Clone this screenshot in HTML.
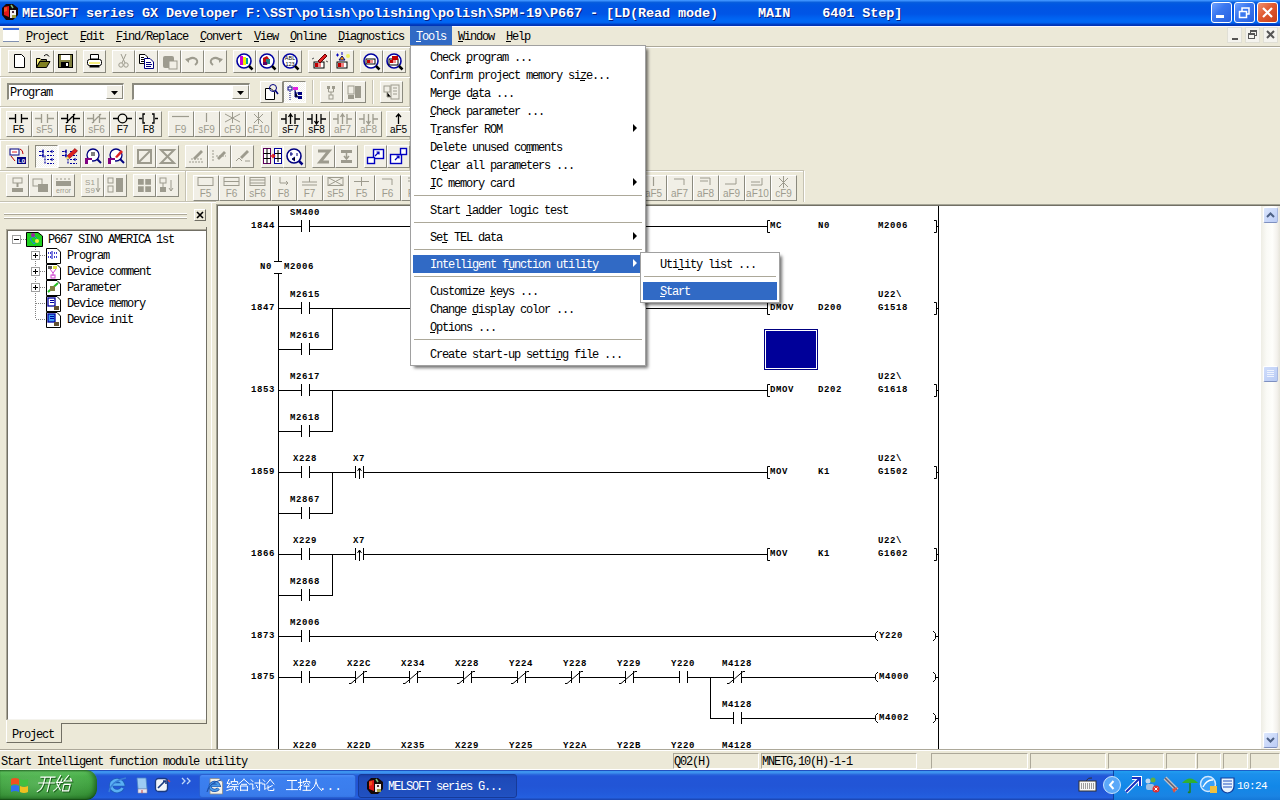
<!DOCTYPE html>
<html><head><meta charset="utf-8"><title>MELSOFT GX Developer</title>
<style>
html,body{margin:0;padding:0;}
body{width:1280px;height:800px;overflow:hidden;position:relative;background:#ECE9D8;font-family:"Liberation Mono",monospace;}
.t{position:absolute;line-height:1;white-space:pre;}
svg{overflow:visible}
</style></head><body>
<div style="position:absolute;left:0px;top:0px;width:1280px;height:26px;background:linear-gradient(to bottom,#3D95FF 0px,#3A8EFB 1px,#0A60DC 2px,#0058E2 4px,#0054E3 8px,#0055E6 14px,#0062F0 18px,#0068F6 21px,#0062EE 23px,#0042C8 24px,#0030B0 26px)"></div>
<svg style="position:absolute;left:1px;top:3px;shape-rendering:auto" width="18" height="18" viewBox="0 0 18 18" shape-rendering="crispEdges"><path d="M5 1 H12 L17 5 V12 L12 17 H5 L1 12 V5Z" fill="#140808"/><path d="M3 4 L8 3 V14 L3 12Z" fill="#E01818"/><path d="M3 5 L6 4 V8 L3 9Z" fill="#F05020"/><rect x="9" y="7" width="6" height="5" fill="#F4F0F0"/><rect x="9" y="12" width="2" height="3" fill="#E8E0F0"/><rect x="11" y="8" width="2" height="2" fill="#503040"/><rect x="11" y="12" width="4" height="3" fill="#A0A040"/><path d="M10 2 L12 5" stroke="#80C080" stroke-width="1.5"/></svg>
<div class="t " style="left:22px;top:6.66px;font-size:13.5px;letter-spacing:-0.1px;color:#fff;font-weight:bold;font-family:'Liberation Mono';white-space:pre;text-shadow:1px 1px 0 #0A1E80">MELSOFT series GX Developer F:\SST\polish\polishing\polish\SPM-19\P667 - [LD(Read mode)     MAIN    6401 Step]</div>
<div style="position:absolute;left:1211px;top:2px;width:19px;height:19px;border:1px solid #fff;border-radius:3px;background:linear-gradient(135deg,#6FA2FF 0%,#3B78F0 40%,#2660E0 100%)"></div>
<div style="position:absolute;left:1234px;top:2px;width:19px;height:19px;border:1px solid #fff;border-radius:3px;background:linear-gradient(135deg,#6FA2FF 0%,#3B78F0 40%,#2660E0 100%)"></div>
<div style="position:absolute;left:1257px;top:2px;width:19px;height:19px;border:1px solid #fff;border-radius:3px;background:linear-gradient(135deg,#F09070 0%,#E05A30 45%,#C8401A 100%)"></div>
<div style="position:absolute;left:1216px;top:15px;width:8px;height:3px;background:#fff"></div>
<svg style="position:absolute;left:1234px;top:2px;shape-rendering:auto" width="21" height="21" viewBox="0 0 21 21" shape-rendering="crispEdges"><rect x="8" y="6" width="7" height="6" fill="none" stroke="#fff" stroke-width="1.5"/><rect x="5.5" y="9.5" width="7" height="6" fill="#3B78F0" stroke="#fff" stroke-width="1.5"/></svg>
<svg style="position:absolute;left:1257px;top:2px;shape-rendering:auto" width="21" height="21" viewBox="0 0 21 21" shape-rendering="crispEdges"><path d="M6 6 L15 15 M15 6 L6 15" stroke="#fff" stroke-width="2.2"/></svg>
<div style="position:absolute;left:0px;top:26px;width:1280px;height:1px;background:#F8F8FF"></div>
<div style="position:absolute;left:0px;top:46px;width:1280px;height:1px;background:#ACA899"></div>
<div style="position:absolute;left:0px;top:47px;width:1280px;height:1px;background:#fff"></div>
<div style="position:absolute;left:3px;top:28px;width:16px;height:14px;background:#fff;border-top:2px solid #3A6EE0;border-bottom:1px solid #8090B0;box-sizing:border-box"></div>
<div style="position:absolute;left:410px;top:26px;width:42px;height:19px;background:#316AC5"></div>
<div class="t " style="left:26px;top:30.81px;font-size:12px;letter-spacing:-1.2px;color:#000;font-weight:normal;font-family:'Liberation Mono';">Project</div>
<div style="position:absolute;left:26px;top:41px;width:5px;height:1px;background:#000"></div>
<div class="t " style="left:80px;top:30.81px;font-size:12px;letter-spacing:-1.2px;color:#000;font-weight:normal;font-family:'Liberation Mono';">Edit</div>
<div style="position:absolute;left:80px;top:41px;width:5px;height:1px;background:#000"></div>
<div class="t " style="left:116px;top:30.81px;font-size:12px;letter-spacing:-1.2px;color:#000;font-weight:normal;font-family:'Liberation Mono';">Find/Replace</div>
<div style="position:absolute;left:116px;top:41px;width:5px;height:1px;background:#000"></div>
<div class="t " style="left:200px;top:30.81px;font-size:12px;letter-spacing:-1.2px;color:#000;font-weight:normal;font-family:'Liberation Mono';">Convert</div>
<div style="position:absolute;left:200px;top:41px;width:5px;height:1px;background:#000"></div>
<div class="t " style="left:254px;top:30.81px;font-size:12px;letter-spacing:-1.2px;color:#000;font-weight:normal;font-family:'Liberation Mono';">View</div>
<div style="position:absolute;left:254px;top:41px;width:5px;height:1px;background:#000"></div>
<div class="t " style="left:290px;top:30.81px;font-size:12px;letter-spacing:-1.2px;color:#000;font-weight:normal;font-family:'Liberation Mono';">Online</div>
<div style="position:absolute;left:290px;top:41px;width:5px;height:1px;background:#000"></div>
<div class="t " style="left:338px;top:30.81px;font-size:12px;letter-spacing:-1.2px;color:#000;font-weight:normal;font-family:'Liberation Mono';">Diagnostics</div>
<div style="position:absolute;left:338px;top:41px;width:5px;height:1px;background:#000"></div>
<div class="t " style="left:416px;top:30.81px;font-size:12px;letter-spacing:-1.2px;color:#fff;font-weight:normal;font-family:'Liberation Mono';">Tools</div>
<div style="position:absolute;left:416px;top:41px;width:5px;height:1px;background:#fff"></div>
<div class="t " style="left:458px;top:30.81px;font-size:12px;letter-spacing:-1.2px;color:#000;font-weight:normal;font-family:'Liberation Mono';">Window</div>
<div style="position:absolute;left:458px;top:41px;width:5px;height:1px;background:#000"></div>
<div class="t " style="left:506px;top:30.81px;font-size:12px;letter-spacing:-1.2px;color:#000;font-weight:normal;font-family:'Liberation Mono';">Help</div>
<div style="position:absolute;left:506px;top:41px;width:5px;height:1px;background:#000"></div>
<div style="position:absolute;left:1227px;top:27px;width:15px;height:16px;background:#F4F3EE;border:1px solid #E0DFD5;box-sizing:border-box"></div>
<div style="position:absolute;left:1245px;top:27px;width:15px;height:16px;background:#F4F3EE;border:1px solid #E0DFD5;box-sizing:border-box"></div>
<div style="position:absolute;left:1263px;top:27px;width:15px;height:16px;background:#F4F3EE;border:1px solid #E0DFD5;box-sizing:border-box"></div>
<div style="position:absolute;left:1232px;top:38px;width:6px;height:2px;background:#555"></div>
<svg style="position:absolute;left:1245px;top:27px;" width="15" height="16" viewBox="0 0 15 16" shape-rendering="crispEdges"><rect x="5.5" y="3.5" width="6" height="5" fill="none" stroke="#555" stroke-width="1"/><rect x="3.5" y="6.5" width="6" height="5" fill="#F4F3EE" stroke="#555" stroke-width="1"/><rect x="5" y="3" width="7" height="2" fill="#555"/><rect x="3" y="6" width="7" height="2" fill="#555"/></svg>
<svg style="position:absolute;left:1263px;top:27px;shape-rendering:auto" width="15" height="16" viewBox="0 0 15 16" shape-rendering="crispEdges"><path d="M4 4 L11 11 M11 4 L4 11" stroke="#555" stroke-width="2"/></svg>
<div style="position:absolute;left:0px;top:76px;width:640px;height:1px;background:#C5C2B2"></div>
<div style="position:absolute;left:0px;top:77px;width:640px;height:1px;background:#FFFFFF"></div>
<div style="position:absolute;left:0px;top:106px;width:640px;height:1px;background:#C5C2B2"></div>
<div style="position:absolute;left:0px;top:107px;width:640px;height:1px;background:#FFFFFF"></div>
<div style="position:absolute;left:0px;top:139px;width:640px;height:1px;background:#C5C2B2"></div>
<div style="position:absolute;left:0px;top:140px;width:640px;height:1px;background:#FFFFFF"></div>
<div style="position:absolute;left:0px;top:170px;width:804px;height:1px;background:#C5C2B2"></div>
<div style="position:absolute;left:0px;top:171px;width:804px;height:1px;background:#FFFFFF"></div>
<div style="position:absolute;left:0px;top:201px;width:216px;height:1px;background:#C5C2B2"></div>
<div style="position:absolute;left:0px;top:202px;width:216px;height:1px;background:#FFFFFF"></div>
<div style="position:absolute;left:409px;top:48px;width:1px;height:28px;background:#C5C2B2"></div>
<div style="position:absolute;left:0px;top:48px;width:1px;height:28px;background:#FFFFFF"></div>
<div style="position:absolute;left:409px;top:78px;width:1px;height:28px;background:#C5C2B2"></div>
<div style="position:absolute;left:0px;top:78px;width:1px;height:28px;background:#FFFFFF"></div>
<div style="position:absolute;left:409px;top:108px;width:1px;height:31px;background:#C5C2B2"></div>
<div style="position:absolute;left:0px;top:108px;width:1px;height:31px;background:#FFFFFF"></div>
<div style="position:absolute;left:409px;top:141px;width:1px;height:29px;background:#C5C2B2"></div>
<div style="position:absolute;left:0px;top:141px;width:1px;height:29px;background:#FFFFFF"></div>
<div style="position:absolute;left:185px;top:171px;width:1px;height:30px;background:#C5C2B2"></div>
<div style="position:absolute;left:186px;top:171px;width:1px;height:30px;background:#FFFFFF"></div>
<div style="position:absolute;left:803px;top:171px;width:1px;height:31px;background:#C5C2B2"></div>
<div style="position:absolute;left:804px;top:171px;width:1px;height:31px;background:#FFFFFF"></div>
<div style="position:absolute;left:8px;top:50px;width:23px;height:23px;box-sizing:border-box;border-top:1px solid #FFFFFF;border-left:1px solid #FFFFFF;border-bottom:1px solid #8B8A7E;border-right:1px solid #8B8A7E;background:#F1EFE6"></div>
<svg style="position:absolute;left:8px;top:50px;shape-rendering:auto" width="23" height="23" viewBox="0 0 23 23" shape-rendering="crispEdges"><path d="M6.5 4.5 H13.5 L16.5 7.5 V17.5 H6.5 Z" fill="#fff" stroke="#000"/></svg>
<div style="position:absolute;left:31px;top:50px;width:23px;height:23px;box-sizing:border-box;border-top:1px solid #FFFFFF;border-left:1px solid #FFFFFF;border-bottom:1px solid #8B8A7E;border-right:1px solid #8B8A7E;background:#F1EFE6"></div>
<svg style="position:absolute;left:31px;top:50px;shape-rendering:auto" width="23" height="23" viewBox="0 0 23 23" shape-rendering="crispEdges"><path d="M5.5 8.5 H9 L10 9.5 H15.5 V11 H9 L5.5 17.5 Z" fill="#F8F080" stroke="#000"/><path d="M5.5 17.5 L9 11.5 H19 L15.5 17.5 Z" fill="#808020" stroke="#000"/><path d="M13 6 Q16 3 18 6.5" fill="none" stroke="#000"/></svg>
<div style="position:absolute;left:54px;top:50px;width:23px;height:23px;box-sizing:border-box;border-top:1px solid #FFFFFF;border-left:1px solid #FFFFFF;border-bottom:1px solid #8B8A7E;border-right:1px solid #8B8A7E;background:#F1EFE6"></div>
<svg style="position:absolute;left:54px;top:50px;shape-rendering:auto" width="23" height="23" viewBox="0 0 23 23" shape-rendering="crispEdges"><rect x="4.5" y="4.5" width="14" height="13" fill="#808040" stroke="#000"/><rect x="7" y="5" width="9" height="5" fill="#fff"/><rect x="7" y="12" width="8" height="5" fill="#000"/><rect x="12" y="13" width="2" height="3" fill="#fff"/></svg>
<div style="position:absolute;left:83px;top:50px;width:23px;height:23px;box-sizing:border-box;border-top:1px solid #FFFFFF;border-left:1px solid #FFFFFF;border-bottom:1px solid #8B8A7E;border-right:1px solid #8B8A7E;background:#F1EFE6"></div>
<svg style="position:absolute;left:83px;top:50px;shape-rendering:auto" width="23" height="23" viewBox="0 0 23 23" shape-rendering="crispEdges"><path d="M7.5 4.5 H15.5 V9 H7.5Z" fill="#fff" stroke="#000"/><rect x="4.5" y="9.5" width="14" height="6" rx="2" fill="#fff" stroke="#000"/><rect x="6" y="12" width="11" height="2" fill="#F8F080"/><rect x="6.5" y="15.5" width="10" height="2" fill="#000"/></svg>
<div style="position:absolute;left:112px;top:50px;width:23px;height:23px;box-sizing:border-box;border-top:1px solid #FFFFFF;border-left:1px solid #FFFFFF;border-bottom:1px solid #8B8A7E;border-right:1px solid #8B8A7E;background:#F1EFE6"></div>
<svg style="position:absolute;left:112px;top:50px;shape-rendering:auto" width="23" height="23" viewBox="0 0 23 23" shape-rendering="crispEdges"><path d="M9 4 L13 13 M14 4 L10 13" stroke="#9D9B8E" fill="none"/><circle cx="9" cy="15" r="2.2" fill="none" stroke="#9D9B8E"/><circle cx="14" cy="15" r="2.2" fill="none" stroke="#9D9B8E"/></svg>
<div style="position:absolute;left:135px;top:50px;width:23px;height:23px;box-sizing:border-box;border-top:1px solid #FFFFFF;border-left:1px solid #FFFFFF;border-bottom:1px solid #8B8A7E;border-right:1px solid #8B8A7E;background:#F1EFE6"></div>
<svg style="position:absolute;left:135px;top:50px;shape-rendering:auto" width="23" height="23" viewBox="0 0 23 23" shape-rendering="crispEdges"><path d="M4.5 4.5 H10 L12.5 7 V13.5 H4.5Z" fill="#fff" stroke="#000"/><path d="M6 7.5 H9 M6 9.5 H10 M6 11.5 H9" stroke="#000"/><path d="M9.5 8.5 H15 L18.5 12 V18.5 H9.5Z" fill="#fff" stroke="#000080"/><path d="M11 12.5 H16 M11 14.5 H17 M11 16.5 H16" stroke="#000080"/></svg>
<div style="position:absolute;left:158px;top:50px;width:23px;height:23px;box-sizing:border-box;border-top:1px solid #FFFFFF;border-left:1px solid #FFFFFF;border-bottom:1px solid #8B8A7E;border-right:1px solid #8B8A7E;background:#F1EFE6"></div>
<svg style="position:absolute;left:158px;top:50px;shape-rendering:auto" width="23" height="23" viewBox="0 0 23 23" shape-rendering="crispEdges"><rect x="5" y="6" width="11" height="12" rx="2" fill="#9D9B8E"/><rect x="11" y="11" width="8" height="8" fill="#F1EFE6" stroke="#9D9B8E"/></svg>
<div style="position:absolute;left:181px;top:50px;width:23px;height:23px;box-sizing:border-box;border-top:1px solid #FFFFFF;border-left:1px solid #FFFFFF;border-bottom:1px solid #8B8A7E;border-right:1px solid #8B8A7E;background:#F1EFE6"></div>
<svg style="position:absolute;left:181px;top:50px;shape-rendering:auto" width="23" height="23" viewBox="0 0 23 23" shape-rendering="crispEdges"><path d="M6 11 Q10 6 15 9 Q18 12 14 15" fill="none" stroke="#9D9B8E" stroke-width="2"/><path d="M4 9 L8 13 L8 8Z" fill="#9D9B8E"/></svg>
<div style="position:absolute;left:204px;top:50px;width:23px;height:23px;box-sizing:border-box;border-top:1px solid #FFFFFF;border-left:1px solid #FFFFFF;border-bottom:1px solid #8B8A7E;border-right:1px solid #8B8A7E;background:#F1EFE6"></div>
<svg style="position:absolute;left:204px;top:50px;shape-rendering:auto" width="23" height="23" viewBox="0 0 23 23" shape-rendering="crispEdges"><path d="M17 11 Q13 6 8 9 Q5 12 9 15" fill="none" stroke="#9D9B8E" stroke-width="2"/><path d="M19 9 L15 13 L15 8Z" fill="#9D9B8E"/></svg>
<div style="position:absolute;left:233px;top:50px;width:23px;height:23px;box-sizing:border-box;border-top:1px solid #FFFFFF;border-left:1px solid #FFFFFF;border-bottom:1px solid #8B8A7E;border-right:1px solid #8B8A7E;background:#F1EFE6"></div>
<svg style="position:absolute;left:233px;top:50px;shape-rendering:auto" width="23" height="23" viewBox="0 0 23 23" shape-rendering="crispEdges"><circle cx="11" cy="11" r="7" fill="#fff" stroke="#0000A0" stroke-width="1.6"/><rect x="7" y="6" width="3" height="9" fill="#D000D0"/><rect x="10" y="7" width="3" height="8" fill="#F0F000"/><rect x="13" y="8" width="2" height="6" fill="#00A0A0"/><path d="M16 16 L19.5 19.5" stroke="#000" stroke-width="2.5"/></svg>
<div style="position:absolute;left:256px;top:50px;width:23px;height:23px;box-sizing:border-box;border-top:1px solid #FFFFFF;border-left:1px solid #FFFFFF;border-bottom:1px solid #8B8A7E;border-right:1px solid #8B8A7E;background:#F1EFE6"></div>
<svg style="position:absolute;left:256px;top:50px;shape-rendering:auto" width="23" height="23" viewBox="0 0 23 23" shape-rendering="crispEdges"><circle cx="11" cy="11" r="7" fill="#fff" stroke="#0000A0" stroke-width="1.6"/><path d="M7 8 L11 6 L14 10 L11 15 L7 13Z" fill="#C01010"/><rect x="10" y="9" width="4" height="5" fill="#208080"/><rect x="7" y="12" width="4" height="3" fill="#600060"/><path d="M16 16 L19.5 19.5" stroke="#000" stroke-width="2.5"/></svg>
<div style="position:absolute;left:279px;top:50px;width:23px;height:23px;box-sizing:border-box;border-top:1px solid #FFFFFF;border-left:1px solid #FFFFFF;border-bottom:1px solid #8B8A7E;border-right:1px solid #8B8A7E;background:#F1EFE6"></div>
<svg style="position:absolute;left:279px;top:50px;shape-rendering:auto" width="23" height="23" viewBox="0 0 23 23" shape-rendering="crispEdges"><circle cx="11" cy="11" r="7" fill="#fff" stroke="#0000A0" stroke-width="1.6"/><text x="11" y="10" font-size="5.5" font-family="Liberation Sans" text-anchor="middle" fill="#000">ABL</text><text x="11" y="15.5" font-size="5.5" font-family="Liberation Sans" text-anchor="middle" fill="#000">123</text><path d="M16 16 L19.5 19.5" stroke="#000" stroke-width="2.5"/></svg>
<div style="position:absolute;left:308px;top:50px;width:23px;height:23px;box-sizing:border-box;border-top:1px solid #FFFFFF;border-left:1px solid #FFFFFF;border-bottom:1px solid #8B8A7E;border-right:1px solid #8B8A7E;background:#F1EFE6"></div>
<svg style="position:absolute;left:308px;top:50px;shape-rendering:auto" width="23" height="23" viewBox="0 0 23 23" shape-rendering="crispEdges"><rect x="6" y="12" width="10" height="6" fill="#fff" stroke="#000"/><rect x="7" y="13" width="3" height="4" fill="#C00000"/><rect x="10" y="13" width="3" height="4" fill="#F08080"/><path d="M10 11 L17 4 L19 6 L12 13Z" fill="#E02020" stroke="#600"/><path d="M4 9 L6 8 M18 11 L20 12" stroke="#555"/></svg>
<div style="position:absolute;left:331px;top:50px;width:23px;height:23px;box-sizing:border-box;border-top:1px solid #FFFFFF;border-left:1px solid #FFFFFF;border-bottom:1px solid #8B8A7E;border-right:1px solid #8B8A7E;background:#F1EFE6"></div>
<svg style="position:absolute;left:331px;top:50px;shape-rendering:auto" width="23" height="23" viewBox="0 0 23 23" shape-rendering="crispEdges"><rect x="6" y="12" width="10" height="6" fill="#fff" stroke="#000"/><rect x="7" y="13" width="3" height="4" fill="#C00000"/><rect x="10" y="13" width="3" height="4" fill="#F08080"/><path d="M8 10 L11 6 L14 10Z" fill="#F0A000" stroke="#000080"/><path d="M5 5 H8 M6.5 3.5 V6.5 M11 2 V5" stroke="#0000C0"/><circle cx="17" cy="6" r="2" fill="#F0F060"/></svg>
<div style="position:absolute;left:360px;top:50px;width:23px;height:23px;box-sizing:border-box;border-top:1px solid #FFFFFF;border-left:1px solid #FFFFFF;border-bottom:1px solid #8B8A7E;border-right:1px solid #8B8A7E;background:#F1EFE6"></div>
<svg style="position:absolute;left:360px;top:50px;shape-rendering:auto" width="23" height="23" viewBox="0 0 23 23" shape-rendering="crispEdges"><circle cx="11" cy="11" r="7" fill="#fff" stroke="#0000A0" stroke-width="1.6"/><rect x="6" y="9" width="9" height="5" fill="#fff" stroke="#000"/><rect x="7" y="10" width="3" height="3" fill="#C00000"/><rect x="10" y="10" width="3" height="3" fill="#F09090"/><path d="M16 16 L19.5 19.5" stroke="#000" stroke-width="2.5"/></svg>
<div style="position:absolute;left:383px;top:50px;width:23px;height:23px;box-sizing:border-box;border-top:1px solid #FFFFFF;border-left:1px solid #FFFFFF;border-bottom:1px solid #8B8A7E;border-right:1px solid #8B8A7E;background:#F1EFE6"></div>
<svg style="position:absolute;left:383px;top:50px;shape-rendering:auto" width="23" height="23" viewBox="0 0 23 23" shape-rendering="crispEdges"><circle cx="11" cy="11" r="7" fill="#fff" stroke="#0000A0" stroke-width="1.6"/><rect x="6" y="9" width="9" height="6" fill="#fff" stroke="#000"/><rect x="9" y="6" width="6" height="4" fill="#C00000"/><rect x="7" y="10" width="3" height="3" fill="#C00000"/><rect x="10" y="10" width="3" height="3" fill="#F09090"/><path d="M16 16 L19.5 19.5" stroke="#000" stroke-width="2.5"/></svg>
<div style="position:absolute;left:7px;top:83px;width:117px;height:17px;box-sizing:border-box;border-top:2px solid #8B8A7E;border-left:2px solid #8B8A7E;border-right:1px solid #fff;border-bottom:1px solid #fff;background:#fff"></div>
<div style="position:absolute;left:106px;top:85px;width:17px;height:14px;box-sizing:border-box;border-top:1px solid #FFFFFF;border-left:1px solid #FFFFFF;border-bottom:1px solid #8B8A7E;border-right:1px solid #8B8A7E;background:#F1EFE6"></div>
<svg style="position:absolute;left:106px;top:85px;shape-rendering:auto" width="17" height="14" viewBox="0 0 17 14" shape-rendering="crispEdges"><path d="M5 6 H12 L8.5 10Z" fill="#000"/></svg>
<div class="t " style="left:10px;top:86.81px;font-size:12px;letter-spacing:-1.2px;color:#000;font-weight:normal;font-family:'Liberation Mono';">Program</div>
<div style="position:absolute;left:132px;top:83px;width:118px;height:17px;box-sizing:border-box;border-top:2px solid #8B8A7E;border-left:2px solid #8B8A7E;border-right:1px solid #fff;border-bottom:1px solid #fff;background:#fff"></div>
<div style="position:absolute;left:232px;top:85px;width:17px;height:14px;box-sizing:border-box;border-top:1px solid #FFFFFF;border-left:1px solid #FFFFFF;border-bottom:1px solid #8B8A7E;border-right:1px solid #8B8A7E;background:#F1EFE6"></div>
<svg style="position:absolute;left:232px;top:85px;shape-rendering:auto" width="17" height="14" viewBox="0 0 17 14" shape-rendering="crispEdges"><path d="M5 6 H12 L8.5 10Z" fill="#000"/></svg>
<div style="position:absolute;left:260px;top:81px;width:23px;height:22px;box-sizing:border-box;border-top:1px solid #FFFFFF;border-left:1px solid #FFFFFF;border-bottom:1px solid #8B8A7E;border-right:1px solid #8B8A7E;background:#F1EFE6"></div>
<svg style="position:absolute;left:260px;top:81px;shape-rendering:auto" width="23" height="22" viewBox="0 0 23 22" shape-rendering="crispEdges"><path d="M5.5 7.5 H11 L14.5 11 V18.5 H5.5Z" fill="#fff" stroke="#000"/><circle cx="13" cy="7" r="3.5" fill="none" stroke="#000080"/><path d="M15 9 L18 13" stroke="#000080" stroke-width="1.5"/></svg>
<div style="position:absolute;left:283px;top:81px;width:23px;height:22px;box-sizing:border-box;border-top:1px solid #8B8A7E;border-left:1px solid #8B8A7E;border-bottom:1px solid #fff;border-right:1px solid #fff;background:repeating-conic-gradient(#fff 0 25%,#F2F1EA 0 50%) 0 0/2px 2px"></div>
<svg style="position:absolute;left:283px;top:81px;shape-rendering:auto" width="23" height="22" viewBox="0 0 23 22" shape-rendering="crispEdges"><path d="M7 4 V19" stroke="#000080" stroke-dasharray="1 1"/><rect x="5" y="6" width="4" height="3" fill="#fff" stroke="#000080"/><rect x="10" y="6" width="5" height="3" fill="#E020E0"/><path d="M12 9 V16 H15 M12 12 H15" stroke="#000080"/><rect x="15" y="11" width="4" height="3" fill="#000080"/><rect x="15" y="15" width="4" height="3" fill="#000080"/></svg>
<div style="position:absolute;left:312px;top:80px;width:1px;height:24px;background:#C5C2B2"></div>
<div style="position:absolute;left:313px;top:80px;width:1px;height:24px;background:#fff"></div>
<div style="position:absolute;left:320px;top:81px;width:23px;height:22px;box-sizing:border-box;border-top:1px solid #FFFFFF;border-left:1px solid #FFFFFF;border-bottom:1px solid #8B8A7E;border-right:1px solid #8B8A7E;background:#F1EFE6"></div>
<svg style="position:absolute;left:320px;top:81px;shape-rendering:auto" width="23" height="22" viewBox="0 0 23 22" shape-rendering="crispEdges"><rect x="7" y="5" width="3" height="3" fill="#9D9B8E"/><rect x="12" y="5" width="3" height="3" fill="#9D9B8E"/><path d="M8.5 8 V11 H13.5 V8 M11 11 V14" stroke="#9D9B8E" fill="none"/><rect x="9" y="14" width="4" height="4" fill="none" stroke="#9D9B8E"/></svg>
<div style="position:absolute;left:343px;top:81px;width:23px;height:22px;box-sizing:border-box;border-top:1px solid #FFFFFF;border-left:1px solid #FFFFFF;border-bottom:1px solid #8B8A7E;border-right:1px solid #8B8A7E;background:#F1EFE6"></div>
<svg style="position:absolute;left:343px;top:81px;shape-rendering:auto" width="23" height="22" viewBox="0 0 23 22" shape-rendering="crispEdges"><rect x="5" y="5" width="6" height="8" fill="none" stroke="#9D9B8E"/><rect x="12" y="5" width="6" height="12" fill="#9D9B8E"/><rect x="5" y="14" width="6" height="4" fill="#9D9B8E"/></svg>
<div style="position:absolute;left:372px;top:80px;width:1px;height:24px;background:#C5C2B2"></div>
<div style="position:absolute;left:373px;top:80px;width:1px;height:24px;background:#fff"></div>
<div style="position:absolute;left:380px;top:81px;width:23px;height:22px;box-sizing:border-box;border-top:1px solid #FFFFFF;border-left:1px solid #FFFFFF;border-bottom:1px solid #8B8A7E;border-right:1px solid #8B8A7E;background:#F1EFE6"></div>
<svg style="position:absolute;left:380px;top:81px;shape-rendering:auto" width="23" height="22" viewBox="0 0 23 22" shape-rendering="crispEdges"><rect x="4" y="5" width="6" height="6" fill="none" stroke="#9D9B8E"/><rect x="11" y="4" width="8" height="14" fill="none" stroke="#9D9B8E"/><path d="M13 7 H17 M13 10 H17 M13 13 H17 M7 11 V16 H11" stroke="#9D9B8E"/></svg>
<div style="position:absolute;left:6px;top:111px;width:26px;height:26px;box-sizing:border-box;border-top:1px solid #FFFFFF;border-left:1px solid #FFFFFF;border-bottom:1px solid #8B8A7E;border-right:1px solid #8B8A7E;background:#F1EFE6"></div>
<svg style="position:absolute;left:6px;top:111px;shape-rendering:auto" width="26" height="26" viewBox="0 0 26 26" shape-rendering="crispEdges"><path d="M3 7.5 H9.5 M9.5 3 V12 M15.5 3 V12 M15.5 7.5 H22" stroke="#000" stroke-width="1.3" fill="none"/><text x="12.5" y="22" font-family="Liberation Sans" font-size="10" text-anchor="middle" fill="#000">F5</text></svg>
<div style="position:absolute;left:32px;top:111px;width:26px;height:26px;box-sizing:border-box;border-top:1px solid #FFFFFF;border-left:1px solid #FFFFFF;border-bottom:1px solid #8B8A7E;border-right:1px solid #8B8A7E;background:#F1EFE6"></div>
<svg style="position:absolute;left:32px;top:111px;shape-rendering:auto" width="26" height="26" viewBox="0 0 26 26" shape-rendering="crispEdges"><path d="M3 7.5 H9.5 M9.5 3 V12 M15.5 3 V12 M15.5 7.5 H22" stroke="#9D9B8E" stroke-width="1.3" fill="none"/><text x="12.5" y="22" font-family="Liberation Sans" font-size="10" text-anchor="middle" fill="#9D9B8E">sF5</text></svg>
<div style="position:absolute;left:58px;top:111px;width:26px;height:26px;box-sizing:border-box;border-top:1px solid #FFFFFF;border-left:1px solid #FFFFFF;border-bottom:1px solid #8B8A7E;border-right:1px solid #8B8A7E;background:#F1EFE6"></div>
<svg style="position:absolute;left:58px;top:111px;shape-rendering:auto" width="26" height="26" viewBox="0 0 26 26" shape-rendering="crispEdges"><path d="M3 7.5 H9.5 M9.5 3 V12 M15.5 3 V12 M15.5 7.5 H22 M8 12 L17 3" stroke="#000" stroke-width="1.3" fill="none"/><text x="12.5" y="22" font-family="Liberation Sans" font-size="10" text-anchor="middle" fill="#000">F6</text></svg>
<div style="position:absolute;left:84px;top:111px;width:26px;height:26px;box-sizing:border-box;border-top:1px solid #FFFFFF;border-left:1px solid #FFFFFF;border-bottom:1px solid #8B8A7E;border-right:1px solid #8B8A7E;background:#F1EFE6"></div>
<svg style="position:absolute;left:84px;top:111px;shape-rendering:auto" width="26" height="26" viewBox="0 0 26 26" shape-rendering="crispEdges"><path d="M3 7.5 H9.5 M9.5 3 V12 M15.5 3 V12 M15.5 7.5 H22 M8 12 L17 3" stroke="#9D9B8E" stroke-width="1.3" fill="none"/><text x="12.5" y="22" font-family="Liberation Sans" font-size="10" text-anchor="middle" fill="#9D9B8E">sF6</text></svg>
<div style="position:absolute;left:110px;top:111px;width:26px;height:26px;box-sizing:border-box;border-top:1px solid #FFFFFF;border-left:1px solid #FFFFFF;border-bottom:1px solid #8B8A7E;border-right:1px solid #8B8A7E;background:#F1EFE6"></div>
<svg style="position:absolute;left:110px;top:111px;shape-rendering:auto" width="26" height="26" viewBox="0 0 26 26" shape-rendering="crispEdges"><path d="M3 7.5 H8 M17 7.5 H22" stroke="#000" stroke-width="1.3"/><circle cx="12.5" cy="7.5" r="4.3" fill="none" stroke="#000" stroke-width="1.3"/><text x="12.5" y="22" font-family="Liberation Sans" font-size="10" text-anchor="middle" fill="#000">F7</text></svg>
<div style="position:absolute;left:136px;top:111px;width:26px;height:26px;box-sizing:border-box;border-top:1px solid #FFFFFF;border-left:1px solid #FFFFFF;border-bottom:1px solid #8B8A7E;border-right:1px solid #8B8A7E;background:#F1EFE6"></div>
<svg style="position:absolute;left:136px;top:111px;shape-rendering:auto" width="26" height="26" viewBox="0 0 26 26" shape-rendering="crispEdges"><path d="M3 7.5 H6 M9 3 H7 V12 H9 M16 3 H18 V12 H16 M19 7.5 H22" stroke="#000" stroke-width="1.3" fill="none"/><text x="12.5" y="22" font-family="Liberation Sans" font-size="10" text-anchor="middle" fill="#000">F8</text></svg>
<div style="position:absolute;left:168px;top:111px;width:26px;height:26px;box-sizing:border-box;border-top:1px solid #FFFFFF;border-left:1px solid #FFFFFF;border-bottom:1px solid #8B8A7E;border-right:1px solid #8B8A7E;background:#F1EFE6"></div>
<svg style="position:absolute;left:168px;top:111px;shape-rendering:auto" width="26" height="26" viewBox="0 0 26 26" shape-rendering="crispEdges"><path d="M4 5.5 H21" stroke="#9D9B8E" stroke-width="1.2"/><text x="12.5" y="22" font-family="Liberation Sans" font-size="10" text-anchor="middle" fill="#9D9B8E">F9</text></svg>
<div style="position:absolute;left:194px;top:111px;width:26px;height:26px;box-sizing:border-box;border-top:1px solid #FFFFFF;border-left:1px solid #FFFFFF;border-bottom:1px solid #8B8A7E;border-right:1px solid #8B8A7E;background:#F1EFE6"></div>
<svg style="position:absolute;left:194px;top:111px;shape-rendering:auto" width="26" height="26" viewBox="0 0 26 26" shape-rendering="crispEdges"><path d="M12.5 2 V11" stroke="#9D9B8E" stroke-width="1.2"/><text x="12.5" y="22" font-family="Liberation Sans" font-size="10" text-anchor="middle" fill="#9D9B8E">sF9</text></svg>
<div style="position:absolute;left:220px;top:111px;width:26px;height:26px;box-sizing:border-box;border-top:1px solid #FFFFFF;border-left:1px solid #FFFFFF;border-bottom:1px solid #8B8A7E;border-right:1px solid #8B8A7E;background:#F1EFE6"></div>
<svg style="position:absolute;left:220px;top:111px;shape-rendering:auto" width="26" height="26" viewBox="0 0 26 26" shape-rendering="crispEdges"><path d="M5 3 L20 11 M20 3 L5 11 M12.5 1 V12" stroke="#9D9B8E" stroke-width="1"/><text x="12.5" y="22" font-family="Liberation Sans" font-size="10" text-anchor="middle" fill="#9D9B8E">cF9</text></svg>
<div style="position:absolute;left:246px;top:111px;width:26px;height:26px;box-sizing:border-box;border-top:1px solid #FFFFFF;border-left:1px solid #FFFFFF;border-bottom:1px solid #8B8A7E;border-right:1px solid #8B8A7E;background:#F1EFE6"></div>
<svg style="position:absolute;left:246px;top:111px;shape-rendering:auto" width="26" height="26" viewBox="0 0 26 26" shape-rendering="crispEdges"><path d="M8 3 L17 12 M17 3 L8 12 M12.5 1 V13" stroke="#9D9B8E" stroke-width="1"/><text x="12.5" y="22" font-family="Liberation Sans" font-size="10" text-anchor="middle" fill="#9D9B8E">cF10</text></svg>
<div style="position:absolute;left:278px;top:111px;width:26px;height:26px;box-sizing:border-box;border-top:1px solid #FFFFFF;border-left:1px solid #FFFFFF;border-bottom:1px solid #8B8A7E;border-right:1px solid #8B8A7E;background:#F1EFE6"></div>
<svg style="position:absolute;left:278px;top:111px;shape-rendering:auto" width="26" height="26" viewBox="0 0 26 26" shape-rendering="crispEdges"><path d="M3 8 H8 M8 3 V13 M17 3 V13 M17 8 H22 M12.5 3 V13 M10.5 6 L12.5 3 L14.5 6" stroke="#000" stroke-width="1.3" fill="none"/><text x="12.5" y="22" font-family="Liberation Sans" font-size="10" text-anchor="middle" fill="#000">sF7</text></svg>
<div style="position:absolute;left:304px;top:111px;width:26px;height:26px;box-sizing:border-box;border-top:1px solid #FFFFFF;border-left:1px solid #FFFFFF;border-bottom:1px solid #8B8A7E;border-right:1px solid #8B8A7E;background:#F1EFE6"></div>
<svg style="position:absolute;left:304px;top:111px;shape-rendering:auto" width="26" height="26" viewBox="0 0 26 26" shape-rendering="crispEdges"><path d="M3 8 H8 M8 3 V13 M17 3 V13 M17 8 H22 M12.5 3 V13 M10.5 10 L12.5 13 L14.5 10" stroke="#000" stroke-width="1.3" fill="none"/><text x="12.5" y="22" font-family="Liberation Sans" font-size="10" text-anchor="middle" fill="#000">sF8</text></svg>
<div style="position:absolute;left:330px;top:111px;width:26px;height:26px;box-sizing:border-box;border-top:1px solid #FFFFFF;border-left:1px solid #FFFFFF;border-bottom:1px solid #8B8A7E;border-right:1px solid #8B8A7E;background:#F1EFE6"></div>
<svg style="position:absolute;left:330px;top:111px;shape-rendering:auto" width="26" height="26" viewBox="0 0 26 26" shape-rendering="crispEdges"><path d="M3 8 H8 M8 3 V13 M17 3 V13 M17 8 H22 M12.5 3 V13 M10.5 6 L12.5 3 L14.5 6" stroke="#9D9B8E" stroke-width="1.3" fill="none"/><text x="12.5" y="22" font-family="Liberation Sans" font-size="10" text-anchor="middle" fill="#9D9B8E">aF7</text></svg>
<div style="position:absolute;left:356px;top:111px;width:26px;height:26px;box-sizing:border-box;border-top:1px solid #FFFFFF;border-left:1px solid #FFFFFF;border-bottom:1px solid #8B8A7E;border-right:1px solid #8B8A7E;background:#F1EFE6"></div>
<svg style="position:absolute;left:356px;top:111px;shape-rendering:auto" width="26" height="26" viewBox="0 0 26 26" shape-rendering="crispEdges"><path d="M3 8 H8 M8 3 V13 M17 3 V13 M17 8 H22 M12.5 3 V13 M10.5 10 L12.5 13 L14.5 10" stroke="#9D9B8E" stroke-width="1.3" fill="none"/><text x="12.5" y="22" font-family="Liberation Sans" font-size="10" text-anchor="middle" fill="#9D9B8E">aF8</text></svg>
<div style="position:absolute;left:386px;top:111px;width:26px;height:26px;box-sizing:border-box;border-top:1px solid #FFFFFF;border-left:1px solid #FFFFFF;border-bottom:1px solid #8B8A7E;border-right:1px solid #8B8A7E;background:#F1EFE6"></div>
<svg style="position:absolute;left:386px;top:111px;shape-rendering:auto" width="26" height="26" viewBox="0 0 26 26" shape-rendering="crispEdges"><path d="M12.5 3 V13 M10 6 L12.5 3 L15 6" stroke="#000" stroke-width="1.3" fill="none"/><text x="12.5" y="22" font-family="Liberation Sans" font-size="10" text-anchor="middle" fill="#000">aF5</text></svg>
<div style="position:absolute;left:6px;top:145px;width:23px;height:23px;box-sizing:border-box;border-top:1px solid #FFFFFF;border-left:1px solid #FFFFFF;border-bottom:1px solid #8B8A7E;border-right:1px solid #8B8A7E;background:#F1EFE6"></div>
<svg style="position:absolute;left:6px;top:145px;shape-rendering:auto" width="23" height="23" viewBox="0 0 23 23" shape-rendering="crispEdges"><rect x="4" y="4" width="9" height="6" fill="#fff" stroke="#000080"/><path d="M6 7 H11" stroke="#E02020"/><rect x="11" y="12" width="9" height="7" fill="#000080"/><text x="15.5" y="18" font-size="6" font-family="Liberation Sans" font-weight="bold" text-anchor="middle" fill="#fff">L0</text><path d="M5 11 L9 16 M14 4 Q17 5 17 9" stroke="#C00000" fill="none"/></svg>
<div style="position:absolute;left:35px;top:145px;width:23px;height:23px;box-sizing:border-box;border-top:1px solid #8B8A7E;border-left:1px solid #8B8A7E;border-bottom:1px solid #fff;border-right:1px solid #fff;background:repeating-conic-gradient(#fff 0 25%,#F2F1EA 0 50%) 0 0/2px 2px"></div>
<svg style="position:absolute;left:35px;top:145px;shape-rendering:auto" width="23" height="23" viewBox="0 0 23 23" shape-rendering="crispEdges"><path d="M4 6.5 H8 M12 6.5 H19 M4 10.5 H8 M12 10.5 H19 M12 14.5 H19 M12 18.5 H19 M10 10.5 V18.5" stroke="#0000A0" stroke-width="1.2" stroke-dasharray="2 1"/><path d="M8 4.5 V8.5 M8 8.5 V12.5" stroke="#0000A0"/><path d="M6 6.5 L8.5 4.8 V8.2Z M6 10.5 L8.5 8.8 V12.2Z M15 6.5 L17.5 4.8 V8.2Z M15 14.5 L17.5 12.8 V16.2Z" fill="#0000A0"/></svg>
<div style="position:absolute;left:58px;top:145px;width:23px;height:23px;box-sizing:border-box;border-top:1px solid #FFFFFF;border-left:1px solid #FFFFFF;border-bottom:1px solid #8B8A7E;border-right:1px solid #8B8A7E;background:#F1EFE6"></div>
<svg style="position:absolute;left:58px;top:145px;shape-rendering:auto" width="23" height="23" viewBox="0 0 23 23" shape-rendering="crispEdges"><path d="M4 6.5 H8 M12 6.5 H19 M4 10.5 H8 M12 10.5 H19 M12 14.5 H19 M12 18.5 H19 M10 10.5 V18.5" stroke="#0000A0" stroke-width="1.2" stroke-dasharray="2 1"/><path d="M8 4.5 V8.5 M8 8.5 V12.5" stroke="#0000A0"/><path d="M6 6.5 L8.5 4.8 V8.2Z M6 10.5 L8.5 8.8 V12.2Z M15 6.5 L17.5 4.8 V8.2Z M15 14.5 L17.5 12.8 V16.2Z" fill="#0000A0"/><path d="M9 11 L17 3.5 L19.5 6 L11.5 13.5Z" fill="#E02020" stroke="#800000" stroke-width="0.6"/><path d="M9 11 L11.5 13.5 L8 14.5Z" fill="#F0E060"/></svg>
<div style="position:absolute;left:81px;top:145px;width:23px;height:23px;box-sizing:border-box;border-top:1px solid #FFFFFF;border-left:1px solid #FFFFFF;border-bottom:1px solid #8B8A7E;border-right:1px solid #8B8A7E;background:#F1EFE6"></div>
<svg style="position:absolute;left:81px;top:145px;shape-rendering:auto" width="23" height="23" viewBox="0 0 23 23" shape-rendering="crispEdges"><circle cx="12" cy="10" r="6" fill="#fff" stroke="#000080" stroke-width="1.3"/><path d="M16 14 L20 18" stroke="#000080" stroke-width="2"/><rect x="4" y="13" width="7" height="6" fill="#800080"/><rect x="7" y="15" width="4" height="4" fill="#fff"/><path d="M10 8 H14 M10 10 H14" stroke="#000"/></svg>
<div style="position:absolute;left:104px;top:145px;width:23px;height:23px;box-sizing:border-box;border-top:1px solid #FFFFFF;border-left:1px solid #FFFFFF;border-bottom:1px solid #8B8A7E;border-right:1px solid #8B8A7E;background:#F1EFE6"></div>
<svg style="position:absolute;left:104px;top:145px;shape-rendering:auto" width="23" height="23" viewBox="0 0 23 23" shape-rendering="crispEdges"><circle cx="12" cy="10" r="6" fill="#fff" stroke="#000080" stroke-width="1.3"/><path d="M16 14 L20 18" stroke="#000080" stroke-width="2"/><rect x="4" y="13" width="7" height="6" fill="#800080"/><rect x="7" y="15" width="4" height="4" fill="#fff"/><path d="M11 12 L17 5 L19 7 L13 13Z" fill="#E02020"/></svg>
<div style="position:absolute;left:133px;top:145px;width:23px;height:23px;box-sizing:border-box;border-top:1px solid #FFFFFF;border-left:1px solid #FFFFFF;border-bottom:1px solid #8B8A7E;border-right:1px solid #8B8A7E;background:#F1EFE6"></div>
<svg style="position:absolute;left:133px;top:145px;shape-rendering:auto" width="23" height="23" viewBox="0 0 23 23" shape-rendering="crispEdges"><rect x="5" y="5" width="13" height="13" fill="none" stroke="#9D9B8E" stroke-width="2"/><path d="M5 18 L18 5" stroke="#9D9B8E" stroke-width="2"/></svg>
<div style="position:absolute;left:156px;top:145px;width:23px;height:23px;box-sizing:border-box;border-top:1px solid #FFFFFF;border-left:1px solid #FFFFFF;border-bottom:1px solid #8B8A7E;border-right:1px solid #8B8A7E;background:#F1EFE6"></div>
<svg style="position:absolute;left:156px;top:145px;shape-rendering:auto" width="23" height="23" viewBox="0 0 23 23" shape-rendering="crispEdges"><path d="M5 5 H18 L5 18 H18Z" fill="none" stroke="#9D9B8E" stroke-width="2"/></svg>
<div style="position:absolute;left:185px;top:145px;width:23px;height:23px;box-sizing:border-box;border-top:1px solid #FFFFFF;border-left:1px solid #FFFFFF;border-bottom:1px solid #8B8A7E;border-right:1px solid #8B8A7E;background:#F1EFE6"></div>
<svg style="position:absolute;left:185px;top:145px;shape-rendering:auto" width="23" height="23" viewBox="0 0 23 23" shape-rendering="crispEdges"><path d="M4 17 H19 M6 14 H17" stroke="#9D9B8E" stroke-dasharray="2 1"/><path d="M8 13 L16 5 L18 7 L10 15Z" fill="#9D9B8E"/></svg>
<div style="position:absolute;left:208px;top:145px;width:23px;height:23px;box-sizing:border-box;border-top:1px solid #FFFFFF;border-left:1px solid #FFFFFF;border-bottom:1px solid #8B8A7E;border-right:1px solid #8B8A7E;background:#F1EFE6"></div>
<svg style="position:absolute;left:208px;top:145px;shape-rendering:auto" width="23" height="23" viewBox="0 0 23 23" shape-rendering="crispEdges"><path d="M5 5 V17 M8 11 H18" stroke="#9D9B8E" stroke-dasharray="2 1"/><path d="M9 13 L16 6 L18 8 L11 15Z" fill="#9D9B8E"/></svg>
<div style="position:absolute;left:231px;top:145px;width:23px;height:23px;box-sizing:border-box;border-top:1px solid #FFFFFF;border-left:1px solid #FFFFFF;border-bottom:1px solid #8B8A7E;border-right:1px solid #8B8A7E;background:#F1EFE6"></div>
<svg style="position:absolute;left:231px;top:145px;shape-rendering:auto" width="23" height="23" viewBox="0 0 23 23" shape-rendering="crispEdges"><path d="M5 16 L8 13 L11 16 M14 16 H19" stroke="#9D9B8E" fill="none"/><path d="M9 12 L16 5 L18 7 L11 14Z" fill="#9D9B8E"/></svg>
<div style="position:absolute;left:261px;top:145px;width:23px;height:23px;box-sizing:border-box;border-top:1px solid #FFFFFF;border-left:1px solid #FFFFFF;border-bottom:1px solid #8B8A7E;border-right:1px solid #8B8A7E;background:#F1EFE6"></div>
<svg style="position:absolute;left:261px;top:145px;shape-rendering:auto" width="23" height="23" viewBox="0 0 23 23" shape-rendering="crispEdges"><rect x="2.5" y="3.5" width="7" height="15" fill="#fff" stroke="#600060"/><path d="M6 3.5 V18.5 M2.5 8.5 H9.5 M2.5 13.5 H9.5" stroke="#000"/><rect x="13.5" y="3.5" width="7" height="15" fill="#fff" stroke="#0000A0"/><path d="M14 8.5 H20 M14 13.5 H20 M17 5 V17" stroke="#000"/><path d="M9.5 11 H13 M11.5 9 L13.5 11 L11.5 13" stroke="#E02020" stroke-width="1.5" fill="none"/></svg>
<div style="position:absolute;left:283px;top:145px;width:23px;height:23px;box-sizing:border-box;border-top:1px solid #FFFFFF;border-left:1px solid #FFFFFF;border-bottom:1px solid #8B8A7E;border-right:1px solid #8B8A7E;background:#F1EFE6"></div>
<svg style="position:absolute;left:283px;top:145px;shape-rendering:auto" width="23" height="23" viewBox="0 0 23 23" shape-rendering="crispEdges"><circle cx="11" cy="11" r="7" fill="#fff" stroke="#000080" stroke-width="1.6"/><path d="M7 9 H10 M8 7 V11 M12 12 L9 14 L12 16 M14 8 V11" stroke="#000080"/><path d="M16 16 L19.5 19.5" stroke="#000080" stroke-width="2.5"/></svg>
<div style="position:absolute;left:312px;top:145px;width:23px;height:23px;box-sizing:border-box;border-top:1px solid #FFFFFF;border-left:1px solid #FFFFFF;border-bottom:1px solid #8B8A7E;border-right:1px solid #8B8A7E;background:#F1EFE6"></div>
<svg style="position:absolute;left:312px;top:145px;shape-rendering:auto" width="23" height="23" viewBox="0 0 23 23" shape-rendering="crispEdges"><path d="M6 6 H17 L8 17 H17" stroke="#9D9B8E" stroke-width="3" fill="none"/></svg>
<div style="position:absolute;left:335px;top:145px;width:23px;height:23px;box-sizing:border-box;border-top:1px solid #FFFFFF;border-left:1px solid #FFFFFF;border-bottom:1px solid #8B8A7E;border-right:1px solid #8B8A7E;background:#F1EFE6"></div>
<svg style="position:absolute;left:335px;top:145px;shape-rendering:auto" width="23" height="23" viewBox="0 0 23 23" shape-rendering="crispEdges"><rect x="6" y="5" width="11" height="3" fill="#9D9B8E"/><path d="M11.5 8 V14 M9 11 L11.5 14 L14 11" stroke="#9D9B8E" stroke-width="1.5" fill="none"/><rect x="6" y="15" width="11" height="3" fill="#9D9B8E"/></svg>
<div style="position:absolute;left:364px;top:145px;width:23px;height:23px;box-sizing:border-box;border-top:1px solid #FFFFFF;border-left:1px solid #FFFFFF;border-bottom:1px solid #8B8A7E;border-right:1px solid #8B8A7E;background:#F1EFE6"></div>
<svg style="position:absolute;left:364px;top:145px;shape-rendering:auto" width="23" height="23" viewBox="0 0 23 23" shape-rendering="crispEdges"><rect x="9.5" y="4.5" width="10" height="9" fill="#fff" stroke="#0000C0" stroke-width="1.4"/><rect x="3.5" y="12.5" width="7" height="6" fill="#fff" stroke="#0000C0" stroke-width="1.4"/><path d="M11 11 L15 7 M12.5 7 H15 V9.5" stroke="#0000C0" stroke-width="1.2" fill="none"/></svg>
<div style="position:absolute;left:387px;top:145px;width:23px;height:23px;box-sizing:border-box;border-top:1px solid #FFFFFF;border-left:1px solid #FFFFFF;border-bottom:1px solid #8B8A7E;border-right:1px solid #8B8A7E;background:#F1EFE6"></div>
<svg style="position:absolute;left:387px;top:145px;shape-rendering:auto" width="23" height="23" viewBox="0 0 23 23" shape-rendering="crispEdges"><rect x="3.5" y="9.5" width="11" height="9" fill="#fff" stroke="#0000C0" stroke-width="1.4"/><rect x="13.5" y="3.5" width="6" height="6" fill="#fff" stroke="#0000C0" stroke-width="1.4"/><path d="M8 15 L12 11 M9.5 11 H12 V13.5" stroke="#0000C0" stroke-width="1.2" fill="none"/></svg>
<div style="position:absolute;left:6px;top:174px;width:23px;height:23px;box-sizing:border-box;border-top:1px solid #FFFFFF;border-left:1px solid #FFFFFF;border-bottom:1px solid #8B8A7E;border-right:1px solid #8B8A7E;background:#F1EFE6"></div>
<svg style="position:absolute;left:6px;top:174px;shape-rendering:auto" width="23" height="23" viewBox="0 0 23 23" shape-rendering="crispEdges"><rect x="7" y="4" width="9" height="5" fill="none" stroke="#9D9B8E"/><path d="M11.5 9 V13" stroke="#9D9B8E" stroke-width="2"/><rect x="6" y="14" width="11" height="4" fill="#9D9B8E"/></svg>
<div style="position:absolute;left:29px;top:174px;width:23px;height:23px;box-sizing:border-box;border-top:1px solid #FFFFFF;border-left:1px solid #FFFFFF;border-bottom:1px solid #8B8A7E;border-right:1px solid #8B8A7E;background:#F1EFE6"></div>
<svg style="position:absolute;left:29px;top:174px;shape-rendering:auto" width="23" height="23" viewBox="0 0 23 23" shape-rendering="crispEdges"><rect x="4" y="5" width="9" height="7" fill="none" stroke="#9D9B8E"/><rect x="9" y="10" width="10" height="8" fill="#9D9B8E"/></svg>
<div style="position:absolute;left:52px;top:174px;width:23px;height:23px;box-sizing:border-box;border-top:1px solid #FFFFFF;border-left:1px solid #FFFFFF;border-bottom:1px solid #8B8A7E;border-right:1px solid #8B8A7E;background:#F1EFE6"></div>
<svg style="position:absolute;left:52px;top:174px;shape-rendering:auto" width="23" height="23" viewBox="0 0 23 23" shape-rendering="crispEdges"><path d="M4 5 H19" stroke="#9D9B8E" stroke-dasharray="2 2"/><rect x="4" y="7" width="15" height="5" fill="#9D9B8E"/><text x="11.5" y="19" font-family="Liberation Sans" font-size="7" text-anchor="middle" fill="#9D9B8E">error</text></svg>
<div style="position:absolute;left:81px;top:174px;width:23px;height:23px;box-sizing:border-box;border-top:1px solid #FFFFFF;border-left:1px solid #FFFFFF;border-bottom:1px solid #8B8A7E;border-right:1px solid #8B8A7E;background:#F1EFE6"></div>
<svg style="position:absolute;left:81px;top:174px;shape-rendering:auto" width="23" height="23" viewBox="0 0 23 23" shape-rendering="crispEdges"><text x="9" y="11" font-family="Liberation Sans" font-size="8" text-anchor="middle" fill="#9D9B8E">S1</text><text x="9" y="19" font-family="Liberation Sans" font-size="8" text-anchor="middle" fill="#9D9B8E">S9</text><path d="M17 4 V17 M15 14 L17 18 L19 14" stroke="#9D9B8E" fill="none"/></svg>
<div style="position:absolute;left:104px;top:174px;width:23px;height:23px;box-sizing:border-box;border-top:1px solid #FFFFFF;border-left:1px solid #FFFFFF;border-bottom:1px solid #8B8A7E;border-right:1px solid #8B8A7E;background:#F1EFE6"></div>
<svg style="position:absolute;left:104px;top:174px;shape-rendering:auto" width="23" height="23" viewBox="0 0 23 23" shape-rendering="crispEdges"><rect x="4" y="4" width="5" height="5" fill="none" stroke="#9D9B8E"/><rect x="4" y="12" width="5" height="6" fill="none" stroke="#9D9B8E"/><rect x="12" y="4" width="7" height="14" fill="#9D9B8E"/></svg>
<div style="position:absolute;left:133px;top:174px;width:23px;height:23px;box-sizing:border-box;border-top:1px solid #FFFFFF;border-left:1px solid #FFFFFF;border-bottom:1px solid #8B8A7E;border-right:1px solid #8B8A7E;background:#F1EFE6"></div>
<svg style="position:absolute;left:133px;top:174px;shape-rendering:auto" width="23" height="23" viewBox="0 0 23 23" shape-rendering="crispEdges"><rect x="5" y="5" width="13" height="13" fill="#9D9B8E"/><path d="M5 11.5 H18 M11.5 5 V18" stroke="#F1EFE6" stroke-width="1.5"/></svg>
<div style="position:absolute;left:156px;top:174px;width:23px;height:23px;box-sizing:border-box;border-top:1px solid #FFFFFF;border-left:1px solid #FFFFFF;border-bottom:1px solid #8B8A7E;border-right:1px solid #8B8A7E;background:#F1EFE6"></div>
<svg style="position:absolute;left:156px;top:174px;shape-rendering:auto" width="23" height="23" viewBox="0 0 23 23" shape-rendering="crispEdges"><rect x="4" y="4" width="6" height="5" fill="none" stroke="#9D9B8E"/><rect x="4" y="13" width="6" height="5" fill="#9D9B8E"/><path d="M7 9 V13 M15 6 V17 M13 14 L15 17 L17 14" stroke="#9D9B8E" fill="none"/></svg>
<div style="position:absolute;left:193px;top:175px;width:26px;height:26px;box-sizing:border-box;border-top:1px solid #FFFFFF;border-left:1px solid #FFFFFF;border-bottom:1px solid #8B8A7E;border-right:1px solid #8B8A7E;background:#F1EFE6"></div>
<svg style="position:absolute;left:193px;top:175px;shape-rendering:auto" width="26" height="26" viewBox="0 0 26 26" shape-rendering="crispEdges"><rect x="5" y="2.5" width="15" height="8" fill="none" stroke="#9D9B8E"/><text x="12.5" y="22" font-family="Liberation Sans" font-size="10" text-anchor="middle" fill="#9D9B8E">F5</text></svg>
<div style="position:absolute;left:219px;top:175px;width:26px;height:26px;box-sizing:border-box;border-top:1px solid #FFFFFF;border-left:1px solid #FFFFFF;border-bottom:1px solid #8B8A7E;border-right:1px solid #8B8A7E;background:#F1EFE6"></div>
<svg style="position:absolute;left:219px;top:175px;shape-rendering:auto" width="26" height="26" viewBox="0 0 26 26" shape-rendering="crispEdges"><rect x="5" y="2.5" width="15" height="8" fill="none" stroke="#9D9B8E"/><path d="M5 6.5 H20" stroke="#9D9B8E"/><text x="12.5" y="22" font-family="Liberation Sans" font-size="10" text-anchor="middle" fill="#9D9B8E">F6</text></svg>
<div style="position:absolute;left:245px;top:175px;width:26px;height:26px;box-sizing:border-box;border-top:1px solid #FFFFFF;border-left:1px solid #FFFFFF;border-bottom:1px solid #8B8A7E;border-right:1px solid #8B8A7E;background:#F1EFE6"></div>
<svg style="position:absolute;left:245px;top:175px;shape-rendering:auto" width="26" height="26" viewBox="0 0 26 26" shape-rendering="crispEdges"><rect x="5" y="2.5" width="15" height="8" fill="none" stroke="#9D9B8E"/><path d="M5 5 H20 M5 8 H20" stroke="#9D9B8E"/><text x="12.5" y="22" font-family="Liberation Sans" font-size="10" text-anchor="middle" fill="#9D9B8E">sF6</text></svg>
<div style="position:absolute;left:271px;top:175px;width:26px;height:26px;box-sizing:border-box;border-top:1px solid #FFFFFF;border-left:1px solid #FFFFFF;border-bottom:1px solid #8B8A7E;border-right:1px solid #8B8A7E;background:#F1EFE6"></div>
<svg style="position:absolute;left:271px;top:175px;shape-rendering:auto" width="26" height="26" viewBox="0 0 26 26" shape-rendering="crispEdges"><path d="M9 2 V8 H17 M15 6 L17 8 L15 10" stroke="#9D9B8E" fill="none"/><text x="12.5" y="22" font-family="Liberation Sans" font-size="10" text-anchor="middle" fill="#9D9B8E">F8</text></svg>
<div style="position:absolute;left:297px;top:175px;width:26px;height:26px;box-sizing:border-box;border-top:1px solid #FFFFFF;border-left:1px solid #FFFFFF;border-bottom:1px solid #8B8A7E;border-right:1px solid #8B8A7E;background:#F1EFE6"></div>
<svg style="position:absolute;left:297px;top:175px;shape-rendering:auto" width="26" height="26" viewBox="0 0 26 26" shape-rendering="crispEdges"><path d="M12.5 2 V7 M5 7 H20 M5 10 H20" stroke="#9D9B8E" fill="none"/><text x="12.5" y="22" font-family="Liberation Sans" font-size="10" text-anchor="middle" fill="#9D9B8E">F7</text></svg>
<div style="position:absolute;left:323px;top:175px;width:26px;height:26px;box-sizing:border-box;border-top:1px solid #FFFFFF;border-left:1px solid #FFFFFF;border-bottom:1px solid #8B8A7E;border-right:1px solid #8B8A7E;background:#F1EFE6"></div>
<svg style="position:absolute;left:323px;top:175px;shape-rendering:auto" width="26" height="26" viewBox="0 0 26 26" shape-rendering="crispEdges"><rect x="5" y="2.5" width="15" height="8" fill="none" stroke="#9D9B8E"/><path d="M5 2.5 L20 10.5 M20 2.5 L5 10.5" stroke="#9D9B8E"/><text x="12.5" y="22" font-family="Liberation Sans" font-size="10" text-anchor="middle" fill="#9D9B8E">sF5</text></svg>
<div style="position:absolute;left:349px;top:175px;width:26px;height:26px;box-sizing:border-box;border-top:1px solid #FFFFFF;border-left:1px solid #FFFFFF;border-bottom:1px solid #8B8A7E;border-right:1px solid #8B8A7E;background:#F1EFE6"></div>
<svg style="position:absolute;left:349px;top:175px;shape-rendering:auto" width="26" height="26" viewBox="0 0 26 26" shape-rendering="crispEdges"><path d="M12.5 2 V11 M5 6.5 H20" stroke="#9D9B8E" fill="none"/><text x="12.5" y="22" font-family="Liberation Sans" font-size="10" text-anchor="middle" fill="#9D9B8E">F5</text></svg>
<div style="position:absolute;left:375px;top:175px;width:26px;height:26px;box-sizing:border-box;border-top:1px solid #FFFFFF;border-left:1px solid #FFFFFF;border-bottom:1px solid #8B8A7E;border-right:1px solid #8B8A7E;background:#F1EFE6"></div>
<svg style="position:absolute;left:375px;top:175px;shape-rendering:auto" width="26" height="26" viewBox="0 0 26 26" shape-rendering="crispEdges"><path d="M7 4 H17 V10" stroke="#9D9B8E" fill="none"/><text x="12.5" y="22" font-family="Liberation Sans" font-size="10" text-anchor="middle" fill="#9D9B8E">F6</text></svg>
<div style="position:absolute;left:401px;top:175px;width:26px;height:26px;box-sizing:border-box;border-top:1px solid #FFFFFF;border-left:1px solid #FFFFFF;border-bottom:1px solid #8B8A7E;border-right:1px solid #8B8A7E;background:#F1EFE6"></div>
<svg style="position:absolute;left:401px;top:175px;shape-rendering:auto" width="26" height="26" viewBox="0 0 26 26" shape-rendering="crispEdges"><path d="M7 3 H17 V10 M7 6 H15" stroke="#9D9B8E" fill="none"/><text x="12.5" y="22" font-family="Liberation Sans" font-size="10" text-anchor="middle" fill="#9D9B8E">F7</text></svg>
<div style="position:absolute;left:427px;top:175px;width:26px;height:26px;box-sizing:border-box;border-top:1px solid #FFFFFF;border-left:1px solid #FFFFFF;border-bottom:1px solid #8B8A7E;border-right:1px solid #8B8A7E;background:#F1EFE6"></div>
<svg style="position:absolute;left:427px;top:175px;shape-rendering:auto" width="26" height="26" viewBox="0 0 26 26" shape-rendering="crispEdges"><rect x="5" y="2.5" width="15" height="8" fill="none" stroke="#9D9B8E"/><text x="12.5" y="22" font-family="Liberation Sans" font-size="10" text-anchor="middle" fill="#9D9B8E">F5</text></svg>
<div style="position:absolute;left:453px;top:175px;width:26px;height:26px;box-sizing:border-box;border-top:1px solid #FFFFFF;border-left:1px solid #FFFFFF;border-bottom:1px solid #8B8A7E;border-right:1px solid #8B8A7E;background:#F1EFE6"></div>
<svg style="position:absolute;left:453px;top:175px;shape-rendering:auto" width="26" height="26" viewBox="0 0 26 26" shape-rendering="crispEdges"><rect x="5" y="2.5" width="15" height="8" fill="none" stroke="#9D9B8E"/><text x="12.5" y="22" font-family="Liberation Sans" font-size="10" text-anchor="middle" fill="#9D9B8E">F5</text></svg>
<div style="position:absolute;left:479px;top:175px;width:26px;height:26px;box-sizing:border-box;border-top:1px solid #FFFFFF;border-left:1px solid #FFFFFF;border-bottom:1px solid #8B8A7E;border-right:1px solid #8B8A7E;background:#F1EFE6"></div>
<svg style="position:absolute;left:479px;top:175px;shape-rendering:auto" width="26" height="26" viewBox="0 0 26 26" shape-rendering="crispEdges"><rect x="5" y="2.5" width="15" height="8" fill="none" stroke="#9D9B8E"/><text x="12.5" y="22" font-family="Liberation Sans" font-size="10" text-anchor="middle" fill="#9D9B8E">F5</text></svg>
<div style="position:absolute;left:505px;top:175px;width:26px;height:26px;box-sizing:border-box;border-top:1px solid #FFFFFF;border-left:1px solid #FFFFFF;border-bottom:1px solid #8B8A7E;border-right:1px solid #8B8A7E;background:#F1EFE6"></div>
<svg style="position:absolute;left:505px;top:175px;shape-rendering:auto" width="26" height="26" viewBox="0 0 26 26" shape-rendering="crispEdges"><rect x="5" y="2.5" width="15" height="8" fill="none" stroke="#9D9B8E"/><text x="12.5" y="22" font-family="Liberation Sans" font-size="10" text-anchor="middle" fill="#9D9B8E">F5</text></svg>
<div style="position:absolute;left:531px;top:175px;width:26px;height:26px;box-sizing:border-box;border-top:1px solid #FFFFFF;border-left:1px solid #FFFFFF;border-bottom:1px solid #8B8A7E;border-right:1px solid #8B8A7E;background:#F1EFE6"></div>
<svg style="position:absolute;left:531px;top:175px;shape-rendering:auto" width="26" height="26" viewBox="0 0 26 26" shape-rendering="crispEdges"><rect x="5" y="2.5" width="15" height="8" fill="none" stroke="#9D9B8E"/><text x="12.5" y="22" font-family="Liberation Sans" font-size="10" text-anchor="middle" fill="#9D9B8E">F5</text></svg>
<div style="position:absolute;left:557px;top:175px;width:26px;height:26px;box-sizing:border-box;border-top:1px solid #FFFFFF;border-left:1px solid #FFFFFF;border-bottom:1px solid #8B8A7E;border-right:1px solid #8B8A7E;background:#F1EFE6"></div>
<svg style="position:absolute;left:557px;top:175px;shape-rendering:auto" width="26" height="26" viewBox="0 0 26 26" shape-rendering="crispEdges"><rect x="5" y="2.5" width="15" height="8" fill="none" stroke="#9D9B8E"/><text x="12.5" y="22" font-family="Liberation Sans" font-size="10" text-anchor="middle" fill="#9D9B8E">F5</text></svg>
<div style="position:absolute;left:583px;top:175px;width:26px;height:26px;box-sizing:border-box;border-top:1px solid #FFFFFF;border-left:1px solid #FFFFFF;border-bottom:1px solid #8B8A7E;border-right:1px solid #8B8A7E;background:#F1EFE6"></div>
<svg style="position:absolute;left:583px;top:175px;shape-rendering:auto" width="26" height="26" viewBox="0 0 26 26" shape-rendering="crispEdges"><rect x="5" y="2.5" width="15" height="8" fill="none" stroke="#9D9B8E"/><text x="12.5" y="22" font-family="Liberation Sans" font-size="10" text-anchor="middle" fill="#9D9B8E">F5</text></svg>
<div style="position:absolute;left:615px;top:175px;width:26px;height:26px;box-sizing:border-box;border-top:1px solid #FFFFFF;border-left:1px solid #FFFFFF;border-bottom:1px solid #8B8A7E;border-right:1px solid #8B8A7E;background:#F1EFE6"></div>
<svg style="position:absolute;left:615px;top:175px;shape-rendering:auto" width="26" height="26" viewBox="0 0 26 26" shape-rendering="crispEdges"><rect x="5" y="2.5" width="15" height="8" fill="none" stroke="#9D9B8E"/><text x="12.5" y="22" font-family="Liberation Sans" font-size="10" text-anchor="middle" fill="#9D9B8E">F5</text></svg>
<div style="position:absolute;left:641px;top:175px;width:26px;height:26px;box-sizing:border-box;border-top:1px solid #FFFFFF;border-left:1px solid #FFFFFF;border-bottom:1px solid #8B8A7E;border-right:1px solid #8B8A7E;background:#F1EFE6"></div>
<svg style="position:absolute;left:641px;top:175px;shape-rendering:auto" width="26" height="26" viewBox="0 0 26 26" shape-rendering="crispEdges"><path d="M12.5 2 V11" stroke="#9D9B8E" stroke-width="1.2"/><text x="12.5" y="22" font-family="Liberation Sans" font-size="10" text-anchor="middle" fill="#9D9B8E">aF5</text></svg>
<div style="position:absolute;left:667px;top:175px;width:26px;height:26px;box-sizing:border-box;border-top:1px solid #FFFFFF;border-left:1px solid #FFFFFF;border-bottom:1px solid #8B8A7E;border-right:1px solid #8B8A7E;background:#F1EFE6"></div>
<svg style="position:absolute;left:667px;top:175px;shape-rendering:auto" width="26" height="26" viewBox="0 0 26 26" shape-rendering="crispEdges"><path d="M7 4 H17 V10" stroke="#9D9B8E" fill="none"/><text x="12.5" y="22" font-family="Liberation Sans" font-size="10" text-anchor="middle" fill="#9D9B8E">aF7</text></svg>
<div style="position:absolute;left:693px;top:175px;width:26px;height:26px;box-sizing:border-box;border-top:1px solid #FFFFFF;border-left:1px solid #FFFFFF;border-bottom:1px solid #8B8A7E;border-right:1px solid #8B8A7E;background:#F1EFE6"></div>
<svg style="position:absolute;left:693px;top:175px;shape-rendering:auto" width="26" height="26" viewBox="0 0 26 26" shape-rendering="crispEdges"><path d="M7 3 H17 V10 M7 6 H15" stroke="#9D9B8E" fill="none"/><text x="12.5" y="22" font-family="Liberation Sans" font-size="10" text-anchor="middle" fill="#9D9B8E">aF8</text></svg>
<div style="position:absolute;left:719px;top:175px;width:26px;height:26px;box-sizing:border-box;border-top:1px solid #FFFFFF;border-left:1px solid #FFFFFF;border-bottom:1px solid #8B8A7E;border-right:1px solid #8B8A7E;background:#F1EFE6"></div>
<svg style="position:absolute;left:719px;top:175px;shape-rendering:auto" width="26" height="26" viewBox="0 0 26 26" shape-rendering="crispEdges"><path d="M6 9 H17 V3" stroke="#9D9B8E" fill="none"/><text x="12.5" y="22" font-family="Liberation Sans" font-size="10" text-anchor="middle" fill="#9D9B8E">aF9</text></svg>
<div style="position:absolute;left:745px;top:175px;width:26px;height:26px;box-sizing:border-box;border-top:1px solid #FFFFFF;border-left:1px solid #FFFFFF;border-bottom:1px solid #8B8A7E;border-right:1px solid #8B8A7E;background:#F1EFE6"></div>
<svg style="position:absolute;left:745px;top:175px;shape-rendering:auto" width="26" height="26" viewBox="0 0 26 26" shape-rendering="crispEdges"><path d="M6 7 H15 M6 10 H17 V3" stroke="#9D9B8E" fill="none"/><text x="12.5" y="22" font-family="Liberation Sans" font-size="10" text-anchor="middle" fill="#9D9B8E">aF10</text></svg>
<div style="position:absolute;left:771px;top:175px;width:26px;height:26px;box-sizing:border-box;border-top:1px solid #FFFFFF;border-left:1px solid #FFFFFF;border-bottom:1px solid #8B8A7E;border-right:1px solid #8B8A7E;background:#F1EFE6"></div>
<svg style="position:absolute;left:771px;top:175px;shape-rendering:auto" width="26" height="26" viewBox="0 0 26 26" shape-rendering="crispEdges"><path d="M8 3 L17 12 M17 3 L8 12 M12.5 1 V13" stroke="#9D9B8E" stroke-width="1"/><text x="12.5" y="22" font-family="Liberation Sans" font-size="10" text-anchor="middle" fill="#9D9B8E">cF9</text></svg>
<div style="position:absolute;left:4px;top:213px;width:183px;height:1px;background:#fff"></div>
<div style="position:absolute;left:4px;top:214px;width:183px;height:1px;background:#ACA899"></div>
<div style="position:absolute;left:4px;top:217px;width:183px;height:1px;background:#fff"></div>
<div style="position:absolute;left:4px;top:218px;width:183px;height:1px;background:#ACA899"></div>
<div style="position:absolute;left:194px;top:209px;width:12px;height:12px;box-sizing:border-box;border-right:1px solid #716F64;border-bottom:1px solid #716F64;border-top:1px solid #fff;border-left:1px solid #fff"></div>
<svg style="position:absolute;left:194px;top:209px;shape-rendering:auto" width="12" height="12" viewBox="0 0 12 12" shape-rendering="crispEdges"><path d="M3 3 L9 9 M9 3 L3 9" stroke="#000" stroke-width="1.6"/></svg>
<div style="position:absolute;left:6px;top:229px;width:200px;height:491px;box-sizing:border-box;border-top:1px solid #ACA899;border-left:1px solid #ACA899;"></div>
<div style="position:absolute;left:7px;top:230px;width:199px;height:490px;box-sizing:border-box;border-top:1px solid #716F64;border-left:1px solid #716F64;border-bottom:1px solid #F4F3EE;background:#fff"></div>
<div style="position:absolute;left:206px;top:227px;width:1px;height:497px;background:#716F64"></div>
<div style="position:absolute;left:211px;top:203px;width:1px;height:546px;background:#fff"></div>
<div style="position:absolute;left:61px;top:723px;width:146px;height:1px;background:#716F64"></div>
<div style="position:absolute;left:6px;top:720px;width:56px;height:23px;box-sizing:border-box;border-left:1px solid #fff;border-bottom:1px solid #716F64;background:#ECE9D8"></div>
<div style="position:absolute;left:61px;top:723px;width:1px;height:19px;background:#716F64"></div>
<div class="t " style="left:12px;top:728.81px;font-size:12px;letter-spacing:-1.2px;color:#000;font-weight:normal;font-family:'Liberation Mono';">Project</div>
<div style="position:absolute;left:12px;top:235px;width:9px;height:9px;box-sizing:border-box;border:1px solid #A0A0A0;background:#fff"></div>
<div style="position:absolute;left:14px;top:239px;width:5px;height:1px;background:#000"></div>
<div style="position:absolute;left:21px;top:239px;width:5px;height:1px;background:repeating-linear-gradient(to right,#808080 0 1px,transparent 1px 2px)"></div>
<svg style="position:absolute;left:26px;top:231px;shape-rendering:auto" width="17" height="16" viewBox="0 0 17 16" shape-rendering="crispEdges"><path d="M0.5 1.5 H12 L16.5 5 V15.5 H0.5Z" fill="#20D020" stroke="#000"/><path d="M4 8 L8 5 L12 9 L8 13Z" fill="none" stroke="#2080F0"/><circle cx="7" cy="4" r="2" fill="#A020A0"/><circle cx="11" cy="10" r="2" fill="#F0F040"/></svg>
<div class="t " style="left:48px;top:233.81px;font-size:12px;letter-spacing:-1.2px;color:#000;font-weight:normal;font-family:'Liberation Mono';">P667 SINO AMERICA 1st</div>
<div style="position:absolute;left:35px;top:247px;width:1px;height:72px;background:repeating-linear-gradient(to bottom,#808080 0 1px,transparent 1px 2px)"></div>
<div style="position:absolute;left:31px;top:251px;width:9px;height:9px;box-sizing:border-box;border:1px solid #A0A0A0;background:#fff"></div>
<div style="position:absolute;left:33px;top:255px;width:5px;height:1px;background:#000"></div>
<div style="position:absolute;left:35px;top:253px;width:1px;height:5px;background:#000"></div>
<div style="position:absolute;left:40px;top:255px;width:6px;height:1px;background:repeating-linear-gradient(to right,#808080 0 1px,transparent 1px 2px)"></div>
<svg style="position:absolute;left:46px;top:248px;shape-rendering:auto" width="15" height="16" viewBox="0 0 15 16" shape-rendering="crispEdges"><path d="M0.5 0.5 H11 L14.5 4 V15.5 H0.5Z" fill="#fff" stroke="#000"/><path d="M2 5 H6 M8 5 H12 M2 9 H6 M8 9 H12" stroke="#0000C0" stroke-width="1.5" stroke-dasharray="1 1"/><path d="M6 3 V11" stroke="#0000C0"/></svg>
<div class="t " style="left:67px;top:249.81px;font-size:12px;letter-spacing:-1.2px;color:#000;font-weight:normal;font-family:'Liberation Mono';">Program</div>
<div style="position:absolute;left:31px;top:267px;width:9px;height:9px;box-sizing:border-box;border:1px solid #A0A0A0;background:#fff"></div>
<div style="position:absolute;left:33px;top:271px;width:5px;height:1px;background:#000"></div>
<div style="position:absolute;left:35px;top:269px;width:1px;height:5px;background:#000"></div>
<div style="position:absolute;left:40px;top:271px;width:6px;height:1px;background:repeating-linear-gradient(to right,#808080 0 1px,transparent 1px 2px)"></div>
<svg style="position:absolute;left:46px;top:264px;shape-rendering:auto" width="15" height="16" viewBox="0 0 15 16" shape-rendering="crispEdges"><path d="M0.5 0.5 H11 L14.5 4 V15.5 H0.5Z" fill="#fff" stroke="#000"/><rect x="2" y="2" width="4" height="3" fill="#606060"/><rect x="7" y="2" width="4" height="3" fill="#E0E040"/><path d="M4 5 L7 9 L10 5 M7 9 V12" stroke="#D040D0" fill="none"/><rect x="5" y="11" width="4" height="3" fill="none" stroke="#D040D0"/></svg>
<div class="t " style="left:67px;top:265.81px;font-size:12px;letter-spacing:-1.2px;color:#000;font-weight:normal;font-family:'Liberation Mono';">Device comment</div>
<div style="position:absolute;left:31px;top:283px;width:9px;height:9px;box-sizing:border-box;border:1px solid #A0A0A0;background:#fff"></div>
<div style="position:absolute;left:33px;top:287px;width:5px;height:1px;background:#000"></div>
<div style="position:absolute;left:35px;top:285px;width:1px;height:5px;background:#000"></div>
<div style="position:absolute;left:40px;top:287px;width:6px;height:1px;background:repeating-linear-gradient(to right,#808080 0 1px,transparent 1px 2px)"></div>
<svg style="position:absolute;left:46px;top:280px;shape-rendering:auto" width="15" height="16" viewBox="0 0 15 16" shape-rendering="crispEdges"><path d="M0.5 0.5 H11 L14.5 4 V15.5 H0.5Z" fill="#fff" stroke="#000"/><path d="M2 12 L12 3" stroke="#20C020" stroke-width="2"/><rect x="4" y="6" width="5" height="5" fill="#808040"/></svg>
<div class="t " style="left:67px;top:281.81px;font-size:12px;letter-spacing:-1.2px;color:#000;font-weight:normal;font-family:'Liberation Mono';">Parameter</div>
<div style="position:absolute;left:36px;top:303px;width:10px;height:1px;background:repeating-linear-gradient(to right,#808080 0 1px,transparent 1px 2px)"></div>
<svg style="position:absolute;left:46px;top:296px;shape-rendering:auto" width="15" height="16" viewBox="0 0 15 16" shape-rendering="crispEdges"><path d="M0.5 0.5 H11 L14.5 4 V15.5 H0.5Z" fill="#fff" stroke="#000"/><rect x="2" y="2" width="7" height="8" fill="#fff" stroke="#0000A0" stroke-width="1.3"/><path d="M4 4.5 H8 M4 6.5 H8" stroke="#0000A0"/><rect x="8" y="10" width="5" height="4" fill="#605030"/></svg>
<div class="t " style="left:67px;top:297.81px;font-size:12px;letter-spacing:-1.2px;color:#000;font-weight:normal;font-family:'Liberation Mono';">Device memory</div>
<div style="position:absolute;left:36px;top:319px;width:10px;height:1px;background:repeating-linear-gradient(to right,#808080 0 1px,transparent 1px 2px)"></div>
<svg style="position:absolute;left:46px;top:312px;shape-rendering:auto" width="15" height="16" viewBox="0 0 15 16" shape-rendering="crispEdges"><path d="M0.5 0.5 H11 L14.5 4 V15.5 H0.5Z" fill="#fff" stroke="#000"/><rect x="2" y="2" width="7" height="8" fill="#40A0F0" stroke="#0000A0" stroke-width="1.3"/><path d="M4 4.5 H8 M4 6.5 H8" stroke="#0000A0"/><rect x="8" y="10" width="5" height="4" fill="#605030"/></svg>
<div class="t " style="left:67px;top:313.81px;font-size:12px;letter-spacing:-1.2px;color:#000;font-weight:normal;font-family:'Liberation Mono';">Device init</div>
<div style="position:absolute;left:216px;top:204px;width:1064px;height:545px;background:#fff"></div>
<div style="position:absolute;left:216px;top:204px;width:1064px;height:1px;background:#A5A596"></div>
<div style="position:absolute;left:217px;top:205px;width:1063px;height:1px;background:#716F64"></div>
<div style="position:absolute;left:216px;top:204px;width:1px;height:545px;background:#A5A596"></div>
<div style="position:absolute;left:217px;top:205px;width:1px;height:544px;background:#716F64"></div>
<div style="position:absolute;left:217px;top:206px;width:1045px;height:543px;overflow:hidden"><svg style="position:absolute;left:-217px;top:-206px" width="1280" height="800" viewBox="0 0 1280 800"><path d="M278.5 206V261 M278.5 274V749 M274 261.5H282 M274 273.5H282 M938.5 206V749 M278 226.5H301 M301.5 220V232 M309.5 220V232 M310 226.5H767 M770 220.5H767.5V232.5H770 M934 220.5H936.5V232.5H934 M937 226.5H938 M278 308.5H301 M301.5 302V314 M309.5 302V314 M310 308.5H767 M770 302.5H767.5V314.5H770 M934 302.5H936.5V314.5H934 M937 308.5H938 M278 349.5H301 M301.5 343V355 M309.5 343V355 M310 349.5H332 M332.5 308V350 M278 390.5H301 M301.5 384V396 M309.5 384V396 M310 390.5H767 M770 384.5H767.5V396.5H770 M934 384.5H936.5V396.5H934 M937 390.5H938 M278 431.5H301 M301.5 425V437 M309.5 425V437 M310 431.5H332 M332.5 390V432 M278 472.5H301 M301.5 466V478 M309.5 466V478 M310 472.5H355 M355.5 466V478 M363.5 466V478 M359.5 468V479 M357.5 471L359.5 468L361.5 471 M364 472.5H767 M770 466.5H767.5V478.5H770 M934 466.5H936.5V478.5H934 M937 472.5H938 M278 513.5H301 M301.5 507V519 M309.5 507V519 M310 513.5H332 M332.5 472V514 M278 554.5H301 M301.5 548V560 M309.5 548V560 M310 554.5H355 M355.5 548V560 M363.5 548V560 M359.5 550V561 M357.5 553L359.5 550L361.5 553 M364 554.5H767 M770 548.5H767.5V560.5H770 M934 548.5H936.5V560.5H934 M937 554.5H938 M278 595.5H301 M301.5 589V601 M309.5 589V601 M310 595.5H332 M332.5 554V596 M278 636.5H301 M301.5 630V642 M309.5 630V642 M310 636.5H875 M878 631L875.5 633.5V638.5L878 641 M933 631L935.5 633.5V638.5L933 641 M936 636.5H938 M278 677.5H301 M301.5 671V683 M309.5 671V683 M310 677.5H355 M355.5 671V683 M363.5 671V683 M351 683.5L365 671.5H367 M351 683.5H349 M364 677.5H409 M409.5 671V683 M417.5 671V683 M405 683.5L419 671.5H421 M405 683.5H403 M418 677.5H463 M463.5 671V683 M471.5 671V683 M459 683.5L473 671.5H475 M459 683.5H457 M472 677.5H517 M517.5 671V683 M525.5 671V683 M513 683.5L527 671.5H529 M513 683.5H511 M526 677.5H571 M571.5 671V683 M579.5 671V683 M567 683.5L581 671.5H583 M567 683.5H565 M580 677.5H625 M625.5 671V683 M633.5 671V683 M621 683.5L635 671.5H637 M621 683.5H619 M634 677.5H679 M679.5 671V683 M687.5 671V683 M688 677.5H733 M733.5 671V683 M741.5 671V683 M729 683.5L743 671.5H745 M729 683.5H727 M742 677.5H875 M878 672L875.5 674.5V679.5L878 682 M933 672L935.5 674.5V679.5L933 682 M936 677.5H938 M710.5 677V719 M710 718.5H733 M733.5 712V724 M741.5 712V724 M742 718.5H875 M878 713L875.5 715.5V720.5L878 723 M933 713L935.5 715.5V720.5L933 723 M936 718.5H938" stroke="#000" stroke-width="1" fill="none"/><text x="260" y="269" font-family="Liberation Mono" font-weight="bold" font-size="9" letter-spacing="0.6" fill="#000">N0</text><text x="284" y="269" font-family="Liberation Mono" font-weight="bold" font-size="9" letter-spacing="0.6" fill="#000">M2006</text><text x="251" y="228" font-family="Liberation Mono" font-weight="bold" font-size="9" letter-spacing="0.6" fill="#000">1844</text><text x="251" y="310" font-family="Liberation Mono" font-weight="bold" font-size="9" letter-spacing="0.6" fill="#000">1847</text><text x="251" y="392" font-family="Liberation Mono" font-weight="bold" font-size="9" letter-spacing="0.6" fill="#000">1853</text><text x="251" y="474" font-family="Liberation Mono" font-weight="bold" font-size="9" letter-spacing="0.6" fill="#000">1859</text><text x="251" y="556" font-family="Liberation Mono" font-weight="bold" font-size="9" letter-spacing="0.6" fill="#000">1866</text><text x="251" y="638" font-family="Liberation Mono" font-weight="bold" font-size="9" letter-spacing="0.6" fill="#000">1873</text><text x="251" y="679" font-family="Liberation Mono" font-weight="bold" font-size="9" letter-spacing="0.6" fill="#000">1875</text><text x="290.0" y="215" font-family="Liberation Mono" font-weight="bold" font-size="9" letter-spacing="0.6" fill="#000">SM400</text><text x="770" y="228" font-family="Liberation Mono" font-weight="bold" font-size="9" letter-spacing="0.6" fill="#000">MC</text><text x="818" y="228" font-family="Liberation Mono" font-weight="bold" font-size="9" letter-spacing="0.6" fill="#000">N0</text><text x="878" y="228" font-family="Liberation Mono" font-weight="bold" font-size="9" letter-spacing="0.6" fill="#000">M2006</text><text x="290.0" y="297" font-family="Liberation Mono" font-weight="bold" font-size="9" letter-spacing="0.6" fill="#000">M2615</text><text x="770" y="310" font-family="Liberation Mono" font-weight="bold" font-size="9" letter-spacing="0.6" fill="#000">DMOV</text><text x="818" y="310" font-family="Liberation Mono" font-weight="bold" font-size="9" letter-spacing="0.6" fill="#000">D200</text><text x="878" y="297" font-family="Liberation Mono" font-weight="bold" font-size="9" letter-spacing="0.6" fill="#000">U22\</text><text x="878" y="310" font-family="Liberation Mono" font-weight="bold" font-size="9" letter-spacing="0.6" fill="#000">G1518</text><text x="290.0" y="338" font-family="Liberation Mono" font-weight="bold" font-size="9" letter-spacing="0.6" fill="#000">M2616</text><text x="290.0" y="379" font-family="Liberation Mono" font-weight="bold" font-size="9" letter-spacing="0.6" fill="#000">M2617</text><text x="770" y="392" font-family="Liberation Mono" font-weight="bold" font-size="9" letter-spacing="0.6" fill="#000">DMOV</text><text x="818" y="392" font-family="Liberation Mono" font-weight="bold" font-size="9" letter-spacing="0.6" fill="#000">D202</text><text x="878" y="379" font-family="Liberation Mono" font-weight="bold" font-size="9" letter-spacing="0.6" fill="#000">U22\</text><text x="878" y="392" font-family="Liberation Mono" font-weight="bold" font-size="9" letter-spacing="0.6" fill="#000">G1618</text><text x="290.0" y="420" font-family="Liberation Mono" font-weight="bold" font-size="9" letter-spacing="0.6" fill="#000">M2618</text><text x="293.0" y="461" font-family="Liberation Mono" font-weight="bold" font-size="9" letter-spacing="0.6" fill="#000">X228</text><text x="353.0" y="461" font-family="Liberation Mono" font-weight="bold" font-size="9" letter-spacing="0.6" fill="#000">X7</text><text x="770" y="474" font-family="Liberation Mono" font-weight="bold" font-size="9" letter-spacing="0.6" fill="#000">MOV</text><text x="818" y="474" font-family="Liberation Mono" font-weight="bold" font-size="9" letter-spacing="0.6" fill="#000">K1</text><text x="878" y="461" font-family="Liberation Mono" font-weight="bold" font-size="9" letter-spacing="0.6" fill="#000">U22\</text><text x="878" y="474" font-family="Liberation Mono" font-weight="bold" font-size="9" letter-spacing="0.6" fill="#000">G1502</text><text x="290.0" y="502" font-family="Liberation Mono" font-weight="bold" font-size="9" letter-spacing="0.6" fill="#000">M2867</text><text x="293.0" y="543" font-family="Liberation Mono" font-weight="bold" font-size="9" letter-spacing="0.6" fill="#000">X229</text><text x="353.0" y="543" font-family="Liberation Mono" font-weight="bold" font-size="9" letter-spacing="0.6" fill="#000">X7</text><text x="770" y="556" font-family="Liberation Mono" font-weight="bold" font-size="9" letter-spacing="0.6" fill="#000">MOV</text><text x="818" y="556" font-family="Liberation Mono" font-weight="bold" font-size="9" letter-spacing="0.6" fill="#000">K1</text><text x="878" y="543" font-family="Liberation Mono" font-weight="bold" font-size="9" letter-spacing="0.6" fill="#000">U22\</text><text x="878" y="556" font-family="Liberation Mono" font-weight="bold" font-size="9" letter-spacing="0.6" fill="#000">G1602</text><text x="290.0" y="584" font-family="Liberation Mono" font-weight="bold" font-size="9" letter-spacing="0.6" fill="#000">M2868</text><text x="290.0" y="625" font-family="Liberation Mono" font-weight="bold" font-size="9" letter-spacing="0.6" fill="#000">M2006</text><text x="879" y="638" font-family="Liberation Mono" font-weight="bold" font-size="9" letter-spacing="0.6" fill="#000">Y220</text><text x="293.0" y="666" font-family="Liberation Mono" font-weight="bold" font-size="9" letter-spacing="0.6" fill="#000">X220</text><text x="347.0" y="666" font-family="Liberation Mono" font-weight="bold" font-size="9" letter-spacing="0.6" fill="#000">X22C</text><text x="401.0" y="666" font-family="Liberation Mono" font-weight="bold" font-size="9" letter-spacing="0.6" fill="#000">X234</text><text x="455.0" y="666" font-family="Liberation Mono" font-weight="bold" font-size="9" letter-spacing="0.6" fill="#000">X228</text><text x="509.0" y="666" font-family="Liberation Mono" font-weight="bold" font-size="9" letter-spacing="0.6" fill="#000">Y224</text><text x="563.0" y="666" font-family="Liberation Mono" font-weight="bold" font-size="9" letter-spacing="0.6" fill="#000">Y228</text><text x="617.0" y="666" font-family="Liberation Mono" font-weight="bold" font-size="9" letter-spacing="0.6" fill="#000">Y229</text><text x="671.0" y="666" font-family="Liberation Mono" font-weight="bold" font-size="9" letter-spacing="0.6" fill="#000">Y220</text><text x="722.0" y="666" font-family="Liberation Mono" font-weight="bold" font-size="9" letter-spacing="0.6" fill="#000">M4128</text><text x="879" y="679" font-family="Liberation Mono" font-weight="bold" font-size="9" letter-spacing="0.6" fill="#000">M4000</text><text x="722.0" y="707" font-family="Liberation Mono" font-weight="bold" font-size="9" letter-spacing="0.6" fill="#000">M4128</text><text x="879" y="720" font-family="Liberation Mono" font-weight="bold" font-size="9" letter-spacing="0.6" fill="#000">M4002</text><text x="293.0" y="748" font-family="Liberation Mono" font-weight="bold" font-size="9" letter-spacing="0.6" fill="#000">X220</text><text x="347.0" y="748" font-family="Liberation Mono" font-weight="bold" font-size="9" letter-spacing="0.6" fill="#000">X22D</text><text x="401.0" y="748" font-family="Liberation Mono" font-weight="bold" font-size="9" letter-spacing="0.6" fill="#000">X235</text><text x="455.0" y="748" font-family="Liberation Mono" font-weight="bold" font-size="9" letter-spacing="0.6" fill="#000">X229</text><text x="509.0" y="748" font-family="Liberation Mono" font-weight="bold" font-size="9" letter-spacing="0.6" fill="#000">Y225</text><text x="563.0" y="748" font-family="Liberation Mono" font-weight="bold" font-size="9" letter-spacing="0.6" fill="#000">Y22A</text><text x="617.0" y="748" font-family="Liberation Mono" font-weight="bold" font-size="9" letter-spacing="0.6" fill="#000">Y22B</text><text x="671.0" y="748" font-family="Liberation Mono" font-weight="bold" font-size="9" letter-spacing="0.6" fill="#000">Y220</text><text x="722.0" y="748" font-family="Liberation Mono" font-weight="bold" font-size="9" letter-spacing="0.6" fill="#000">M4128</text></svg></div>
<div style="position:absolute;left:764px;top:329px;width:54px;height:41px;box-sizing:border-box;border:1px solid #000080;background:#000099;box-shadow:inset 0 0 0 1px #fff"></div>
<div style="position:absolute;left:1261px;top:206px;width:19px;height:543px;background:linear-gradient(to right,#EEEDE5,#FAFAF6 30%,#FEFEFB 60%,#F3F1EC 85%,#E6E4DA)"></div>
<div style="position:absolute;left:1263px;top:207px;width:15px;height:16px;box-sizing:border-box;border:1px solid #fff;border-bottom-color:#7E90C0;border-right-color:#A8B8E0;border-radius:2px;background:linear-gradient(135deg,#DCE7FD,#BBCCF6)"></div>
<svg style="position:absolute;left:1263px;top:207px;shape-rendering:auto" width="15" height="16" viewBox="0 0 15 16" shape-rendering="crispEdges"><path d="M4 10 L7.5 6.5 L11 10" stroke="#4D6185" stroke-width="2" fill="none"/></svg>
<div style="position:absolute;left:1263px;top:732px;width:15px;height:16px;box-sizing:border-box;border:1px solid #fff;border-bottom-color:#7E90C0;border-right-color:#A8B8E0;border-radius:2px;background:linear-gradient(135deg,#DCE7FD,#BBCCF6)"></div>
<svg style="position:absolute;left:1263px;top:732px;shape-rendering:auto" width="15" height="16" viewBox="0 0 15 16" shape-rendering="crispEdges"><path d="M4 6 L7.5 9.5 L11 6" stroke="#4D6185" stroke-width="2" fill="none"/></svg>
<div style="position:absolute;left:1263px;top:366px;width:15px;height:16px;box-sizing:border-box;border:1px solid #fff;border-bottom-color:#7E90C0;border-right-color:#A8B8E0;border-radius:2px;background:linear-gradient(135deg,#D0DDFB,#B8CBF5)"></div>
<div style="position:absolute;left:1267px;top:370px;width:7px;height:1px;background:#EEF3FE"></div>
<div style="position:absolute;left:1267px;top:372px;width:7px;height:1px;background:#EEF3FE"></div>
<div style="position:absolute;left:1267px;top:374px;width:7px;height:1px;background:#EEF3FE"></div>
<div style="position:absolute;left:1267px;top:376px;width:7px;height:1px;background:#EEF3FE"></div>
<div style="position:absolute;left:0px;top:749px;width:1280px;height:21px;background:#ECE9D8"></div>
<div style="position:absolute;left:0px;top:749px;width:1280px;height:1px;background:#ACA899"></div>
<div style="position:absolute;left:0px;top:750px;width:1280px;height:1px;background:#fff"></div>
<div style="position:absolute;left:0px;top:769px;width:1280px;height:1px;background:#fff"></div>
<div class="t " style="left:1px;top:755.81px;font-size:12px;letter-spacing:-1.2px;color:#000;font-weight:normal;font-family:'Liberation Mono';">Start Intelligent function module utility</div>
<div style="position:absolute;left:673px;top:753px;width:86px;height:16px;box-sizing:border-box;border-top:1px solid #ACA899;border-left:1px solid #ACA899;border-right:1px solid #fff;border-bottom:1px solid #fff"></div>
<div style="position:absolute;left:761px;top:753px;width:156px;height:16px;box-sizing:border-box;border-top:1px solid #ACA899;border-left:1px solid #ACA899;border-right:1px solid #fff;border-bottom:1px solid #fff"></div>
<div style="position:absolute;left:931px;top:753px;width:97px;height:16px;box-sizing:border-box;border-top:1px solid #ACA899;border-left:1px solid #ACA899;border-right:1px solid #fff;border-bottom:1px solid #fff"></div>
<div style="position:absolute;left:1030px;top:753px;width:76px;height:16px;box-sizing:border-box;border-top:1px solid #ACA899;border-left:1px solid #ACA899;border-right:1px solid #fff;border-bottom:1px solid #fff"></div>
<div style="position:absolute;left:1108px;top:753px;width:56px;height:16px;box-sizing:border-box;border-top:1px solid #ACA899;border-left:1px solid #ACA899;border-right:1px solid #fff;border-bottom:1px solid #fff"></div>
<div style="position:absolute;left:1166px;top:753px;width:30px;height:16px;box-sizing:border-box;border-top:1px solid #ACA899;border-left:1px solid #ACA899;border-right:1px solid #fff;border-bottom:1px solid #fff"></div>
<div style="position:absolute;left:1197px;top:753px;width:24px;height:16px;box-sizing:border-box;border-top:1px solid #ACA899;border-left:1px solid #ACA899;border-right:1px solid #fff;border-bottom:1px solid #fff"></div>
<div style="position:absolute;left:1223px;top:753px;width:25px;height:16px;box-sizing:border-box;border-top:1px solid #ACA899;border-left:1px solid #ACA899;border-right:1px solid #fff;border-bottom:1px solid #fff"></div>
<div style="position:absolute;left:1250px;top:753px;width:30px;height:16px;box-sizing:border-box;border-top:1px solid #ACA899;border-left:1px solid #ACA899;border-right:1px solid #fff;border-bottom:1px solid #fff"></div>
<div class="t " style="left:674px;top:755.81px;font-size:12px;letter-spacing:-1.2px;color:#000;font-weight:normal;font-family:'Liberation Mono';">Q02(H)</div>
<div class="t " style="left:762px;top:755.81px;font-size:12px;letter-spacing:-1.2px;color:#000;font-weight:normal;font-family:'Liberation Mono';">MNETG,10(H)-1-1</div>
<div style="position:absolute;left:0px;top:770px;width:1280px;height:30px;background:linear-gradient(to bottom,#2050C0 0px,#2050C0 1px,#3D95F0 1px,#3D92EE 3px,#2E70E0 4px,#2256D8 6px,#2255D6 16px,#225BDC 24px,#2460E0 28px,#1B48B8 29px,#1B48B8 30px)"></div>
<div style="position:absolute;left:0;top:770px;width:97px;height:30px;border-radius:0 11px 11px 0;background:radial-gradient(ellipse 60px 18px at 40px 14px,rgba(120,200,120,0.45),rgba(0,0,0,0) 100%),linear-gradient(to bottom,#2E7A2E 0px,#5CC25C 2px,#48AE48 6px,#3A9A3A 18px,#348E34 25px,#2A7A2A 30px);box-shadow:inset -3px 0 4px rgba(0,40,0,0.45),inset 0 -1px 1px rgba(0,40,0,0.4)"></div>
<svg style="position:absolute;left:10px;top:776px;shape-rendering:auto" width="20" height="19" viewBox="0 0 20 19" shape-rendering="crispEdges"><path d="M1 3 Q5 1 9 3 V9 Q5 7 1 9Z" fill="#F05020"/><path d="M10 3 Q14 5 18 3 V9 Q14 11 10 9Z" fill="#40C040"/><path d="M1 10 Q5 8 9 10 V16 Q5 14 1 16Z" fill="#3070F0"/><path d="M10 10 Q14 12 18 10 V16 Q14 18 10 16Z" fill="#F0C020"/></svg>
<svg style="position:absolute;left:40px;top:775px;shape-rendering:auto" width="38" height="19" viewBox="0 0 38 19" shape-rendering="crispEdges"><g transform="translate(1,1)"><g transform="translate(0,0) skewX(-14) scale(1.4166666666666667)"><path d="M1 1.5 H11 M0.5 5.6 H11.5 M4 1.5 V6 Q4 10 1 11.6 M8 1.5 V11.6" stroke="#1A5A1A" stroke-width="0.78" fill="none" stroke-linecap="square"/></g><g transform="translate(17,0) skewX(-14) scale(1.4166666666666667)"><path d="M2.6 0.4 L1 5.2 H5.2 M4.2 2.8 Q3.4 8.6 0.4 11.2 M1.6 6.2 L5 10.6 M8.2 0.4 L6 4.2 H11.4 L10.2 2.6 M6.6 6.6 H11 V11.2 H6.6 Z" stroke="#1A5A1A" stroke-width="0.78" fill="none" stroke-linecap="square"/></g></g><g transform="translate(0,0) skewX(-14) scale(1.4166666666666667)"><path d="M1 1.5 H11 M0.5 5.6 H11.5 M4 1.5 V6 Q4 10 1 11.6 M8 1.5 V11.6" stroke="#fff" stroke-width="0.78" fill="none" stroke-linecap="square"/></g><g transform="translate(17,0) skewX(-14) scale(1.4166666666666667)"><path d="M2.6 0.4 L1 5.2 H5.2 M4.2 2.8 Q3.4 8.6 0.4 11.2 M1.6 6.2 L5 10.6 M8.2 0.4 L6 4.2 H11.4 L10.2 2.6 M6.6 6.6 H11 V11.2 H6.6 Z" stroke="#fff" stroke-width="0.78" fill="none" stroke-linecap="square"/></g></svg>
<svg style="position:absolute;left:108px;top:776px;shape-rendering:auto" width="20" height="18" viewBox="0 0 20 18" shape-rendering="crispEdges"><path d="M14.5 12 A6 5.5 0 1 1 15 8.5 H5" stroke="#1E5FB8" stroke-width="4.2" fill="none"/><path d="M14.5 12 A6 5.5 0 1 1 15 8.5 H5" stroke="#5AB0F4" stroke-width="2.6" fill="none"/><path d="M1 16 Q3 5 18 2" stroke="#3A80D8" stroke-width="1.4" fill="none"/></svg>
<svg style="position:absolute;left:134px;top:776px;shape-rendering:auto" width="16" height="18" viewBox="0 0 16 18" shape-rendering="crispEdges"><path d="M3 2 H12 L13 13 H4Z" fill="#9CCBF4" stroke="#4D86C8" stroke-width="0.8"/><path d="M4 13 H13 V17 H4Z" fill="#E8E6F0" stroke="#9090B0" stroke-width="0.6"/><path d="M8 14 V17" stroke="#C04040"/></svg>
<svg style="position:absolute;left:154px;top:776px;shape-rendering:auto" width="17" height="18" viewBox="0 0 17 18" shape-rendering="crispEdges"><rect x="1.5" y="2.5" width="12" height="13" rx="3" fill="#F0F4FA" stroke="#1A3A80" stroke-width="1.3"/><path d="M4 12 L11 5 M9 5 H12 V8" stroke="#1A3A80" stroke-width="1.6" fill="none"/><path d="M14 4 L16 6" stroke="#E04040" stroke-width="1.2"/></svg>
<svg style="position:absolute;left:181px;top:777px;shape-rendering:auto" width="12" height="8" viewBox="0 0 12 8" shape-rendering="crispEdges"><path d="M1 1 L4 4 L1 7 M6 1 L9 4 L6 7" stroke="#C0D8F8" stroke-width="1.3" fill="none"/></svg>
<div style="position:absolute;left:199px;top:774px;width:157px;height:24px;box-sizing:border-box;border-radius:3px;background:linear-gradient(to bottom,#4C8DF8 0,#3C80F0 3px,#3A7CEC 20px,#3070E0 24px);border:1px solid #2A60D0"></div>
<div style="position:absolute;left:358px;top:774px;width:159px;height:24px;box-sizing:border-box;border-radius:3px;background:linear-gradient(to bottom,#1A40A8 0,#1E4AB8 3px,#2050C0 20px,#2558C8 24px);border:1px solid #163A98"></div>
<svg style="position:absolute;left:206px;top:777px;shape-rendering:auto" width="18" height="18" viewBox="0 0 18 18" shape-rendering="crispEdges"><path d="M4 1.5 H13 L16.5 5 V17 H4Z" fill="#F4F2E8" stroke="#8A8A8A" stroke-width="0.8"/><path d="M12.5 11.5 A4.5 4 0 1 1 13 8.5 H5.5" stroke="#1A4FA8" stroke-width="3.2" fill="none"/><path d="M12.5 11.5 A4.5 4 0 1 1 13 8.5 H5.5" stroke="#4A9AE8" stroke-width="1.8" fill="none"/><path d="M1 15 Q3 6 15 3" stroke="#1A4FA8" stroke-width="1.1" fill="none"/></svg>
<svg style="position:absolute;left:226px;top:779px;shape-rendering:auto" width="100" height="14" viewBox="0 0 100 14" shape-rendering="crispEdges"><g transform="translate(0,0) skewX(0) scale(1.0)"><path d="M3 0.5 L1 4.5 L4.2 4.2 L1 8.5 L5 7.5 M0.8 11.5 L5 10.2 M8.5 0 V1.6 M5.3 2.6 V4.2 M5.3 2.6 H11.6 V4.2 M6.3 5.6 H10.8 M5.2 7.6 H12 M8.6 7.6 V11.6 L7.6 11 M6.6 9 L5.4 11 M10.6 9 L11.8 11" stroke="#fff" stroke-width="1.00" fill="none" stroke-linecap="square"/></g><g transform="translate(12,0) skewX(0) scale(1.0)"><path d="M6 0.3 L0.5 5.2 M6 0.3 L11.5 5.2 M3.5 5.3 H8.5 M2.6 7 V11.6 M2.6 7 H9.4 V11.6 M2.6 11.2 H9.4" stroke="#fff" stroke-width="1.00" fill="none" stroke-linecap="square"/></g><g transform="translate(24,0) skewX(0) scale(1.0)"><path d="M1.2 0.8 L2.8 2.5 M0.4 5 H2.8 V10.6 L4.4 9 M5 4 H12 M9.6 0.8 V11.6 L8 10.6 M6.4 6.4 L7.6 8.6" stroke="#fff" stroke-width="1.00" fill="none" stroke-linecap="square"/></g><g transform="translate(36,0) skewX(0) scale(1.0)"><path d="M1.2 0.8 L2.8 2.5 M0.4 5 H2.8 V10.6 L4.4 9 M8.2 0.5 L4.6 5 M8.2 0.5 L12 5 M6 6.8 V10.6 Q6 11.5 7.5 11.5 H11.8 V10 M6 8.8 L10.2 6.6" stroke="#fff" stroke-width="1.00" fill="none" stroke-linecap="square"/></g><g transform="translate(60,0) skewX(0) scale(1.0)"><path d="M1.5 1.5 H10.5 M6 1.5 V10.6 M0.5 10.6 H11.5" stroke="#fff" stroke-width="1.00" fill="none" stroke-linecap="square"/></g><g transform="translate(72,0) skewX(0) scale(1.0)"><path d="M0.4 3.6 H4 M2.4 0.4 V11 L1.4 10.4 M0.4 8.4 L4 6.2 M8.6 0 V1.6 M5.4 2.6 V4 M5.4 2.6 H11.8 V4 M7.6 4.2 L6.2 6 M9.6 4.2 L11 6 M6.2 7.2 H11 M8.6 7.2 V11.2 M5 11.3 H12" stroke="#fff" stroke-width="1.00" fill="none" stroke-linecap="square"/></g><g transform="translate(84,0) skewX(0) scale(1.0)"><path d="M6 0.4 V3 Q5.4 8 0.5 11.6 M6 3.2 Q7.2 8 11.6 11.6" stroke="#fff" stroke-width="1.00" fill="none" stroke-linecap="square"/></g></svg>
<div class="t " style="left:319px;top:780.81px;font-size:12px;letter-spacing:0.6px;color:#fff;font-weight:normal;font-family:'Liberation Mono';">...</div>
<svg style="position:absolute;left:366px;top:777px;shape-rendering:auto" width="18" height="18" viewBox="0 0 18 18" shape-rendering="crispEdges"><path d="M5 1 H12 L17 5 V12 L12 17 H5 L1 12 V5Z" fill="#140808"/><path d="M3 4 L8 3 V14 L3 12Z" fill="#E01818"/><path d="M3 5 L6 4 V8 L3 9Z" fill="#F05020"/><rect x="9" y="7" width="6" height="5" fill="#F4F0F0"/><rect x="9" y="12" width="2" height="3" fill="#E8E0F0"/><rect x="11" y="8" width="2" height="2" fill="#503040"/><rect x="11" y="12" width="4" height="3" fill="#A0A040"/><path d="M10 2 L12 5" stroke="#80C080" stroke-width="1.5"/></svg>
<div class="t " style="left:388px;top:780.81px;font-size:12px;letter-spacing:-1.2px;color:#fff;font-weight:normal;font-family:'Liberation Mono';">MELSOFT series G...</div>
<div style="position:absolute;left:1113px;top:770px;width:167px;height:30px;background:linear-gradient(to bottom,#1C60C8 0px,#1C60C8 1px,#22A0F0 1px,#1C90EC 4px,#1288E8 16px,#1A84E4 26px,#1478D8 30px);border-left:1px solid #1042A0"></div>
<svg style="position:absolute;left:1078px;top:777px;shape-rendering:auto" width="20" height="16" viewBox="0 0 20 16" shape-rendering="crispEdges"><rect x="1" y="4" width="17" height="10" fill="#F8F8F8" stroke="#303030"/><path d="M3 7 H16 M3 9 H16 M3 11 H16" stroke="#404040" stroke-dasharray="1 1"/><path d="M8 4 Q10 0 14 1" stroke="#303030" fill="none"/></svg>
<svg style="position:absolute;left:1102px;top:775px;shape-rendering:auto" width="20" height="20" viewBox="0 0 20 20" shape-rendering="crispEdges"><circle cx="10" cy="10" r="8.5" fill="#5AA8F8" stroke="#C8E4FF" stroke-width="1"/><path d="M11.5 6 L8 10 L11.5 14" stroke="#fff" stroke-width="2" fill="none"/></svg>
<svg style="position:absolute;left:1124px;top:775px;shape-rendering:auto" width="19" height="19" viewBox="0 0 19 19" shape-rendering="crispEdges"><path d="M2 17 L15 4 M8 3 H16 V11" stroke="#fff" stroke-width="4" fill="none"/><path d="M2 17 L15 4 M8 3 H16 V11" stroke="#1830C0" stroke-width="2" fill="none"/></svg>
<svg style="position:absolute;left:1143px;top:775px;shape-rendering:auto" width="18" height="19" viewBox="0 0 18 19" shape-rendering="crispEdges"><circle cx="5" cy="6" r="2.5" fill="#C0D8F0"/><circle cx="10" cy="5" r="2.5" fill="#60B040"/><rect x="3" y="9" width="8" height="6" rx="2" fill="#A0C0E0"/><circle cx="13" cy="14" r="3.5" fill="#E03030"/><path d="M11.5 12.5 L14.5 15.5 M14.5 12.5 L11.5 15.5" stroke="#fff"/></svg>
<svg style="position:absolute;left:1162px;top:775px;shape-rendering:auto" width="18" height="19" viewBox="0 0 18 19" shape-rendering="crispEdges"><path d="M3 3 L15 15" stroke="#C0C0C8" stroke-width="4"/><path d="M3 3 L15 15" stroke="#606070" stroke-width="1.5"/><path d="M10 14 L12 18 L16 12" fill="#E05040"/></svg>
<svg style="position:absolute;left:1180px;top:775px;shape-rendering:auto" width="20" height="19" viewBox="0 0 20 19" shape-rendering="crispEdges"><path d="M2 8 Q10 -1 18 8Z" fill="#30B030"/><path d="M10 8 V17 Q10 18 8 17" stroke="#208020" stroke-width="1.5" fill="none"/></svg>
<svg style="position:absolute;left:1199px;top:775px;shape-rendering:auto" width="19" height="19" viewBox="0 0 19 19" shape-rendering="crispEdges"><circle cx="9" cy="9" r="7.5" fill="#3AA0F8" stroke="#D0E8FF" stroke-width="1.5"/><path d="M4 12 Q8 4 14 5" stroke="#fff" stroke-width="1.5" fill="none"/><rect x="11" y="11" width="7" height="7" fill="#F0C040"/></svg>
<svg style="position:absolute;left:1218px;top:775px;shape-rendering:auto" width="19" height="19" viewBox="0 0 19 19" shape-rendering="crispEdges"><path d="M3 3 H16 V11 Q16 17 9.5 18 Q3 17 3 11Z" fill="#E8F4FF" stroke="#1040A0" stroke-width="1.2"/><path d="M5 6 H14 M5 9 H14 M5 12 H14" stroke="#2050C0" stroke-width="1.2"/></svg>
<div class="t " style="left:1237px;top:780.57px;font-size:11px;letter-spacing:-0.6px;color:#fff;font-weight:normal;font-family:'Liberation Mono';">10:24</div>
<div style="position:absolute;left:410px;top:45px;width:236px;height:321px;box-sizing:border-box;border:1px solid #A0A0A0;background:#fff;box-shadow:3px 3px 3px -1px rgba(0,0,0,0.55)"></div>
<div class="t " style="left:430px;top:51.81px;font-size:12px;letter-spacing:-1.2px;color:#000;font-weight:normal;font-family:'Liberation Mono';">Check program ...</div>
<div style="position:absolute;left:466px;top:62px;width:5px;height:1px;background:#000"></div>
<div class="t " style="left:430px;top:69.81px;font-size:12px;letter-spacing:-1.2px;color:#000;font-weight:normal;font-family:'Liberation Mono';">Confirm project memory size...</div>
<div style="position:absolute;left:580px;top:80px;width:5px;height:1px;background:#000"></div>
<div class="t " style="left:430px;top:87.81px;font-size:12px;letter-spacing:-1.2px;color:#000;font-weight:normal;font-family:'Liberation Mono';">Merge data ...</div>
<div style="position:absolute;left:472px;top:98px;width:5px;height:1px;background:#000"></div>
<div class="t " style="left:430px;top:105.81px;font-size:12px;letter-spacing:-1.2px;color:#000;font-weight:normal;font-family:'Liberation Mono';">Check parameter ...</div>
<div style="position:absolute;left:430px;top:116px;width:5px;height:1px;background:#000"></div>
<div class="t " style="left:430px;top:123.81px;font-size:12px;letter-spacing:-1.2px;color:#000;font-weight:normal;font-family:'Liberation Mono';">Transfer ROM</div>
<div style="position:absolute;left:436px;top:134px;width:5px;height:1px;background:#000"></div>
<svg style="position:absolute;left:633px;top:124px;shape-rendering:auto" width="5" height="8" viewBox="0 0 5 8" shape-rendering="crispEdges"><path d="M0 0 L4 4 L0 8Z" fill="#000"/></svg>
<div class="t " style="left:430px;top:141.81px;font-size:12px;letter-spacing:-1.2px;color:#000;font-weight:normal;font-family:'Liberation Mono';">Delete unused comments</div>
<div style="position:absolute;left:526px;top:152px;width:5px;height:1px;background:#000"></div>
<div class="t " style="left:430px;top:159.81px;font-size:12px;letter-spacing:-1.2px;color:#000;font-weight:normal;font-family:'Liberation Mono';">Clear all parameters ...</div>
<div style="position:absolute;left:442px;top:170px;width:5px;height:1px;background:#000"></div>
<div class="t " style="left:430px;top:177.81px;font-size:12px;letter-spacing:-1.2px;color:#000;font-weight:normal;font-family:'Liberation Mono';">IC memory card</div>
<div style="position:absolute;left:430px;top:188px;width:5px;height:1px;background:#000"></div>
<svg style="position:absolute;left:633px;top:178px;shape-rendering:auto" width="5" height="8" viewBox="0 0 5 8" shape-rendering="crispEdges"><path d="M0 0 L4 4 L0 8Z" fill="#000"/></svg>
<div style="position:absolute;left:414px;top:195px;width:228px;height:1px;background:#ACA899"></div>
<div class="t " style="left:430px;top:204.81px;font-size:12px;letter-spacing:-1.2px;color:#000;font-weight:normal;font-family:'Liberation Mono';">Start ladder logic test</div>
<div style="position:absolute;left:466px;top:215px;width:5px;height:1px;background:#000"></div>
<div style="position:absolute;left:414px;top:222px;width:228px;height:1px;background:#ACA899"></div>
<div class="t " style="left:430px;top:231.81px;font-size:12px;letter-spacing:-1.2px;color:#000;font-weight:normal;font-family:'Liberation Mono';">Set TEL data</div>
<div style="position:absolute;left:442px;top:242px;width:5px;height:1px;background:#000"></div>
<svg style="position:absolute;left:633px;top:232px;shape-rendering:auto" width="5" height="8" viewBox="0 0 5 8" shape-rendering="crispEdges"><path d="M0 0 L4 4 L0 8Z" fill="#000"/></svg>
<div style="position:absolute;left:414px;top:249px;width:228px;height:1px;background:#ACA899"></div>
<div style="position:absolute;left:413px;top:255px;width:230px;height:18px;background:#316AC5"></div>
<div class="t " style="left:430px;top:258.81px;font-size:12px;letter-spacing:-1.2px;color:#fff;font-weight:normal;font-family:'Liberation Mono';">Intelligent function utility</div>
<div style="position:absolute;left:508px;top:269px;width:5px;height:1px;background:#fff"></div>
<svg style="position:absolute;left:633px;top:259px;shape-rendering:auto" width="5" height="8" viewBox="0 0 5 8" shape-rendering="crispEdges"><path d="M0 0 L4 4 L0 8Z" fill="#fff"/></svg>
<div style="position:absolute;left:414px;top:276px;width:228px;height:1px;background:#ACA899"></div>
<div class="t " style="left:430px;top:285.81px;font-size:12px;letter-spacing:-1.2px;color:#000;font-weight:normal;font-family:'Liberation Mono';">Customize keys ...</div>
<div style="position:absolute;left:490px;top:296px;width:5px;height:1px;background:#000"></div>
<div class="t " style="left:430px;top:303.81px;font-size:12px;letter-spacing:-1.2px;color:#000;font-weight:normal;font-family:'Liberation Mono';">Change display color ...</div>
<div style="position:absolute;left:472px;top:314px;width:5px;height:1px;background:#000"></div>
<div class="t " style="left:430px;top:321.81px;font-size:12px;letter-spacing:-1.2px;color:#000;font-weight:normal;font-family:'Liberation Mono';">Options ...</div>
<div style="position:absolute;left:430px;top:332px;width:5px;height:1px;background:#000"></div>
<div style="position:absolute;left:414px;top:339px;width:228px;height:1px;background:#ACA899"></div>
<div class="t " style="left:430px;top:348.81px;font-size:12px;letter-spacing:-1.2px;color:#000;font-weight:normal;font-family:'Liberation Mono';">Create start-up setting file ...</div>
<div style="position:absolute;left:556px;top:359px;width:5px;height:1px;background:#000"></div>
<div style="position:absolute;left:640px;top:252px;width:140px;height:51px;box-sizing:border-box;border:1px solid #A0A0A0;background:#fff;box-shadow:3px 3px 3px -1px rgba(0,0,0,0.55)"></div>
<div class="t " style="left:660px;top:258.81px;font-size:12px;letter-spacing:-1.2px;color:#000;font-weight:normal;font-family:'Liberation Mono';">Utility list ...</div>
<div style="position:absolute;left:678px;top:269px;width:5px;height:1px;background:#000"></div>
<div style="position:absolute;left:644px;top:276px;width:132px;height:1px;background:#ACA899"></div>
<div style="position:absolute;left:643px;top:282px;width:134px;height:18px;background:#316AC5"></div>
<div class="t " style="left:660px;top:285.81px;font-size:12px;letter-spacing:-1.2px;color:#fff;font-weight:normal;font-family:'Liberation Mono';">Start</div>
<div style="position:absolute;left:660px;top:296px;width:5px;height:1px;background:#fff"></div>
</body></html>
